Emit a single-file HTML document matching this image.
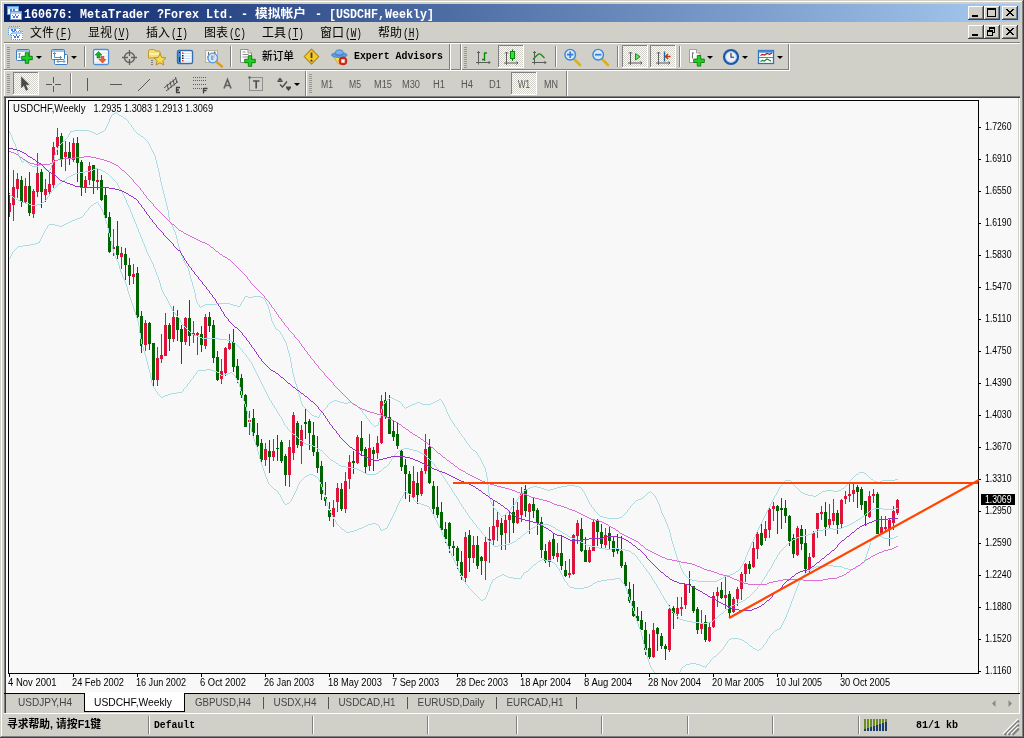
<!DOCTYPE html>
<html lang="zh-CN"><head><meta charset="utf-8"><title>160676: MetaTrader - [USDCHF,Weekly]</title>
<style>
html,body{margin:0;padding:0;background:#D0D0C8;overflow:hidden}
svg{display:block;will-change:transform}
.s{font-family:"Liberation Sans","DejaVu Sans",sans-serif}
.m{font-family:"Liberation Mono","DejaVu Sans Mono",monospace}
.c{font-family:"Liberation Sans","Noto Sans CJK SC","WenQuanYi Zen Hei",sans-serif}
</style></head><body>
<svg width="1024" height="738" viewBox="0 0 1024 738" shape-rendering="crispEdges">
<rect x="0" y="0" width="1024" height="738" fill="#D0D0C8"/>
<rect x="0" y="0" width="1024" height="1" fill="#D0D0C8"/>
<rect x="0" y="0" width="1" height="738" fill="#D0D0C8"/>
<rect x="1" y="1" width="1022" height="1" fill="#FFFFFF"/>
<rect x="1" y="1" width="1" height="736" fill="#FFFFFF"/>
<rect x="0" y="737" width="1024" height="1" fill="#404040"/>
<rect x="1023" y="0" width="1" height="738" fill="#404040"/>
<rect x="1" y="736" width="1022" height="1" fill="#808080"/>
<rect x="1022" y="1" width="1" height="736" fill="#808080"/>
<defs><linearGradient id="tg" x1="0" x2="1" y1="0" y2="0"><stop offset="0" stop-color="#0A246A"/><stop offset="1" stop-color="#A6CAF0"/></linearGradient></defs>
<rect x="4" y="4" width="1016" height="18" fill="url(#tg)"/>
<g transform="translate(7,5)">
<rect x="0.5" y="1.5" width="11" height="8" fill="#fff" stroke="#5A9CDC"/>
<rect x="1" y="2" width="10" height="2" fill="#A8CCF0"/>
<path d="M2.5 6.5 l1.5-2 1.5 2 1.5-2 1.5 2" fill="none" stroke="#4A78E0" stroke-width="1"/>
<rect x="3.5" y="6.5" width="11" height="8" fill="#fff" stroke="#5A9CDC"/>
<rect x="4" y="7" width="10" height="2" fill="#A8CCF0"/>
<path d="M5.5 10 l1.5 3 1.5-3 1.5 3 1.5-3" fill="none" stroke="#4A78E0" stroke-width="1"/>
</g>
<text class="m" x="24" y="18" font-size="12" fill="#fff" font-weight="bold" textLength="224" lengthAdjust="spacingAndGlyphs">160676: MetaTrader ?Forex Ltd. -</text>
<text class="c" x="255" y="18" font-size="12" fill="#fff" font-weight="bold" textLength="51" lengthAdjust="spacingAndGlyphs">模拟帐户</text>
<text class="m" x="315" y="18" font-size="12" fill="#fff" font-weight="bold" textLength="119" lengthAdjust="spacingAndGlyphs">- [USDCHF,Weekly]</text>
<rect x="968" y="6" width="16" height="14" fill="#D0D0C8"/>
<rect x="968" y="6" width="15" height="1" fill="#FFFFFF"/>
<rect x="968" y="6" width="1" height="13" fill="#FFFFFF"/>
<rect x="968" y="19" width="16" height="1" fill="#404040"/>
<rect x="983" y="6" width="1" height="14" fill="#404040"/>
<rect x="969" y="18" width="14" height="1" fill="#808080"/>
<rect x="982" y="7" width="1" height="12" fill="#808080"/>
<rect x="972" y="15" width="6" height="2" fill="#000"/>
<rect x="984" y="6" width="16" height="14" fill="#D0D0C8"/>
<rect x="984" y="6" width="15" height="1" fill="#FFFFFF"/>
<rect x="984" y="6" width="1" height="13" fill="#FFFFFF"/>
<rect x="984" y="19" width="16" height="1" fill="#404040"/>
<rect x="999" y="6" width="1" height="14" fill="#404040"/>
<rect x="985" y="18" width="14" height="1" fill="#808080"/>
<rect x="998" y="7" width="1" height="12" fill="#808080"/>
<rect x="987" y="8" width="9" height="9" fill="#000"/>
<rect x="988" y="10" width="7" height="6" fill="#D0D0C8"/>
<rect x="1002" y="6" width="16" height="14" fill="#D0D0C8"/>
<rect x="1002" y="6" width="15" height="1" fill="#FFFFFF"/>
<rect x="1002" y="6" width="1" height="13" fill="#FFFFFF"/>
<rect x="1002" y="19" width="16" height="1" fill="#404040"/>
<rect x="1017" y="6" width="1" height="14" fill="#404040"/>
<rect x="1003" y="18" width="14" height="1" fill="#808080"/>
<rect x="1016" y="7" width="1" height="12" fill="#808080"/>
<path d="M1006 9 l2 0 l6 7 l-2 0 z M1012 9 l2 0 l-6 7 l-2 0 z" fill="#000"/>
<g transform="translate(8,25)">
<rect x="0.5" y="1.5" width="11" height="8" fill="#fff" stroke="#5A9CDC" stroke-dasharray="1 1"/>
<rect x="1" y="2" width="10" height="2" fill="#A8CCF0"/>
<path d="M2.5 6.5 l1.5-2 1.5 2 1.5-2 1.5 2" fill="none" stroke="#4A78E0" stroke-width="1"/>
<rect x="3.5" y="6.5" width="11" height="8" fill="#fff" stroke="#5A9CDC" stroke-dasharray="1 1"/>
<rect x="4" y="7" width="10" height="2" fill="#A8CCF0"/>
<path d="M5.5 10 l1.5 3 1.5-3 1.5 3 1.5-3" fill="none" stroke="#4A78E0" stroke-width="1"/>
</g>
<text class="c" x="30" y="37" font-size="12" textLength="24" lengthAdjust="spacingAndGlyphs">文件</text>
<text class="m" x="55" y="37" font-size="12" textLength="17" lengthAdjust="spacingAndGlyphs">(F)</text>
<rect x="60" y="39" width="6" height="1" fill="#000"/>
<text class="c" x="88" y="37" font-size="12" textLength="24" lengthAdjust="spacingAndGlyphs">显视</text>
<text class="m" x="113" y="37" font-size="12" textLength="17" lengthAdjust="spacingAndGlyphs">(V)</text>
<rect x="118" y="39" width="6" height="1" fill="#000"/>
<text class="c" x="146" y="37" font-size="12" textLength="24" lengthAdjust="spacingAndGlyphs">插入</text>
<text class="m" x="171" y="37" font-size="12" textLength="17" lengthAdjust="spacingAndGlyphs">(I)</text>
<rect x="176" y="39" width="6" height="1" fill="#000"/>
<text class="c" x="204" y="37" font-size="12" textLength="24" lengthAdjust="spacingAndGlyphs">图表</text>
<text class="m" x="229" y="37" font-size="12" textLength="17" lengthAdjust="spacingAndGlyphs">(C)</text>
<rect x="234" y="39" width="6" height="1" fill="#000"/>
<text class="c" x="262" y="37" font-size="12" textLength="24" lengthAdjust="spacingAndGlyphs">工具</text>
<text class="m" x="287" y="37" font-size="12" textLength="17" lengthAdjust="spacingAndGlyphs">(T)</text>
<rect x="292" y="39" width="6" height="1" fill="#000"/>
<text class="c" x="320" y="37" font-size="12" textLength="24" lengthAdjust="spacingAndGlyphs">窗口</text>
<text class="m" x="345" y="37" font-size="12" textLength="17" lengthAdjust="spacingAndGlyphs">(W)</text>
<rect x="350" y="39" width="6" height="1" fill="#000"/>
<text class="c" x="378" y="37" font-size="12" textLength="24" lengthAdjust="spacingAndGlyphs">帮助</text>
<text class="m" x="403" y="37" font-size="12" textLength="17" lengthAdjust="spacingAndGlyphs">(H)</text>
<rect x="408" y="39" width="6" height="1" fill="#000"/>
<rect x="968" y="25" width="16" height="14" fill="#D0D0C8"/>
<rect x="968" y="25" width="15" height="1" fill="#FFFFFF"/>
<rect x="968" y="25" width="1" height="13" fill="#FFFFFF"/>
<rect x="968" y="38" width="16" height="1" fill="#404040"/>
<rect x="983" y="25" width="1" height="14" fill="#404040"/>
<rect x="969" y="37" width="14" height="1" fill="#808080"/>
<rect x="982" y="26" width="1" height="12" fill="#808080"/>
<rect x="972" y="34" width="6" height="2" fill="#000"/>
<rect x="984" y="25" width="16" height="14" fill="#D0D0C8"/>
<rect x="984" y="25" width="15" height="1" fill="#FFFFFF"/>
<rect x="984" y="25" width="1" height="13" fill="#FFFFFF"/>
<rect x="984" y="38" width="16" height="1" fill="#404040"/>
<rect x="999" y="25" width="1" height="14" fill="#404040"/>
<rect x="985" y="37" width="14" height="1" fill="#808080"/>
<rect x="998" y="26" width="1" height="12" fill="#808080"/>
<rect x="989" y="27" width="6" height="6" fill="#000"/>
<rect x="990" y="29" width="4" height="3" fill="#D0D0C8"/>
<rect x="987" y="30" width="6" height="6" fill="#000"/>
<rect x="988" y="32" width="4" height="3" fill="#D0D0C8"/>
<rect x="1002" y="25" width="16" height="14" fill="#D0D0C8"/>
<rect x="1002" y="25" width="15" height="1" fill="#FFFFFF"/>
<rect x="1002" y="25" width="1" height="13" fill="#FFFFFF"/>
<rect x="1002" y="38" width="16" height="1" fill="#404040"/>
<rect x="1017" y="25" width="1" height="14" fill="#404040"/>
<rect x="1003" y="37" width="14" height="1" fill="#808080"/>
<rect x="1016" y="26" width="1" height="12" fill="#808080"/>
<path d="M1006 28 l2 0 l6 7 l-2 0 z M1012 28 l2 0 l-6 7 l-2 0 z" fill="#000"/>
<rect x="4" y="42" width="1016" height="1" fill="#808080"/>
<rect x="4" y="43" width="1016" height="1" fill="#FFFFFF"/>
<defs><pattern id="chk" width="2" height="2" patternUnits="userSpaceOnUse"><rect width="2" height="2" fill="#fff"/><rect width="1" height="1" fill="#D0D0C8"/><rect x="1" y="1" width="1" height="1" fill="#D0D0C8"/></pattern></defs>
<rect x="4" y="44" width="1" height="26" fill="#FFFFFF"/>
<rect x="4" y="69" width="786" height="1" fill="#808080"/>
<rect x="4" y="70" width="786" height="1" fill="#FFFFFF"/>
<rect x="449" y="44" width="1" height="26" fill="#808080"/>
<rect x="450" y="44" width="1" height="26" fill="#FFFFFF"/>
<rect x="460" y="44" width="1" height="26" fill="#808080"/>
<rect x="461" y="44" width="1" height="26" fill="#FFFFFF"/>
<rect x="788" y="44" width="1" height="26" fill="#808080"/>
<rect x="789" y="44" width="1" height="27" fill="#FFFFFF"/>
<rect x="7" y="47" width="3" height="1" fill="#9A968E"/>
<rect x="7" y="49" width="3" height="1" fill="#9A968E"/>
<rect x="7" y="51" width="3" height="1" fill="#9A968E"/>
<rect x="7" y="53" width="3" height="1" fill="#9A968E"/>
<rect x="7" y="55" width="3" height="1" fill="#9A968E"/>
<rect x="7" y="57" width="3" height="1" fill="#9A968E"/>
<rect x="7" y="59" width="3" height="1" fill="#9A968E"/>
<rect x="7" y="61" width="3" height="1" fill="#9A968E"/>
<rect x="7" y="63" width="3" height="1" fill="#9A968E"/>
<rect x="7" y="65" width="3" height="1" fill="#9A968E"/>
<rect x="7" y="67" width="3" height="1" fill="#9A968E"/>
<rect x="464" y="47" width="3" height="1" fill="#9A968E"/>
<rect x="464" y="49" width="3" height="1" fill="#9A968E"/>
<rect x="464" y="51" width="3" height="1" fill="#9A968E"/>
<rect x="464" y="53" width="3" height="1" fill="#9A968E"/>
<rect x="464" y="55" width="3" height="1" fill="#9A968E"/>
<rect x="464" y="57" width="3" height="1" fill="#9A968E"/>
<rect x="464" y="59" width="3" height="1" fill="#9A968E"/>
<rect x="464" y="61" width="3" height="1" fill="#9A968E"/>
<rect x="464" y="63" width="3" height="1" fill="#9A968E"/>
<rect x="464" y="65" width="3" height="1" fill="#9A968E"/>
<rect x="464" y="67" width="3" height="1" fill="#9A968E"/>
<rect x="84" y="46" width="1" height="21" fill="#808080"/>
<rect x="85" y="46" width="1" height="21" fill="#FFFFFF"/>
<rect x="230" y="46" width="1" height="21" fill="#808080"/>
<rect x="231" y="46" width="1" height="21" fill="#FFFFFF"/>
<rect x="555" y="46" width="1" height="21" fill="#808080"/>
<rect x="556" y="46" width="1" height="21" fill="#FFFFFF"/>
<rect x="617" y="46" width="1" height="21" fill="#808080"/>
<rect x="618" y="46" width="1" height="21" fill="#FFFFFF"/>
<rect x="679" y="46" width="1" height="21" fill="#808080"/>
<rect x="680" y="46" width="1" height="21" fill="#FFFFFF"/>
<rect x="4" y="71" width="1" height="25" fill="#FFFFFF"/>
<rect x="305" y="71" width="1" height="25" fill="#808080"/>
<rect x="306" y="71" width="1" height="25" fill="#FFFFFF"/>
<rect x="566" y="71" width="1" height="25" fill="#808080"/>
<rect x="567" y="71" width="1" height="25" fill="#FFFFFF"/>
<rect x="7" y="74" width="3" height="1" fill="#9A968E"/>
<rect x="7" y="76" width="3" height="1" fill="#9A968E"/>
<rect x="7" y="78" width="3" height="1" fill="#9A968E"/>
<rect x="7" y="80" width="3" height="1" fill="#9A968E"/>
<rect x="7" y="82" width="3" height="1" fill="#9A968E"/>
<rect x="7" y="84" width="3" height="1" fill="#9A968E"/>
<rect x="7" y="86" width="3" height="1" fill="#9A968E"/>
<rect x="7" y="88" width="3" height="1" fill="#9A968E"/>
<rect x="7" y="90" width="3" height="1" fill="#9A968E"/>
<rect x="7" y="92" width="3" height="1" fill="#9A968E"/>
<rect x="309" y="74" width="3" height="1" fill="#9A968E"/>
<rect x="309" y="76" width="3" height="1" fill="#9A968E"/>
<rect x="309" y="78" width="3" height="1" fill="#9A968E"/>
<rect x="309" y="80" width="3" height="1" fill="#9A968E"/>
<rect x="309" y="82" width="3" height="1" fill="#9A968E"/>
<rect x="309" y="84" width="3" height="1" fill="#9A968E"/>
<rect x="309" y="86" width="3" height="1" fill="#9A968E"/>
<rect x="309" y="88" width="3" height="1" fill="#9A968E"/>
<rect x="309" y="90" width="3" height="1" fill="#9A968E"/>
<rect x="309" y="92" width="3" height="1" fill="#9A968E"/>
<rect x="70" y="73" width="1" height="21" fill="#808080"/>
<rect x="71" y="73" width="1" height="21" fill="#FFFFFF"/>
<rect x="4" y="96" width="1016" height="1" fill="#808080"/>
<rect x="4" y="97" width="1016" height="1" fill="#404040"/>
<rect x="13" y="72" width="26" height="23" fill="url(#chk)"/>
<rect x="13" y="72" width="26" height="1" fill="#808080"/>
<rect x="13" y="72" width="1" height="23" fill="#808080"/>
<rect x="13" y="94" width="26" height="1" fill="#FFFFFF"/>
<rect x="38" y="72" width="1" height="23" fill="#FFFFFF"/>
<rect x="511" y="72" width="26" height="23" fill="url(#chk)"/>
<rect x="511" y="72" width="26" height="1" fill="#808080"/>
<rect x="511" y="72" width="1" height="23" fill="#808080"/>
<rect x="511" y="94" width="26" height="1" fill="#FFFFFF"/>
<rect x="536" y="72" width="1" height="23" fill="#FFFFFF"/>
<rect x="498" y="45" width="26" height="23" fill="url(#chk)"/>
<rect x="498" y="45" width="26" height="1" fill="#808080"/>
<rect x="498" y="45" width="1" height="23" fill="#808080"/>
<rect x="498" y="67" width="26" height="1" fill="#FFFFFF"/>
<rect x="523" y="45" width="1" height="23" fill="#FFFFFF"/>
<rect x="622" y="45" width="26" height="23" fill="url(#chk)"/>
<rect x="622" y="45" width="26" height="1" fill="#808080"/>
<rect x="622" y="45" width="1" height="23" fill="#808080"/>
<rect x="622" y="67" width="26" height="1" fill="#FFFFFF"/>
<rect x="647" y="45" width="1" height="23" fill="#FFFFFF"/>
<rect x="650" y="45" width="26" height="23" fill="url(#chk)"/>
<rect x="650" y="45" width="26" height="1" fill="#808080"/>
<rect x="650" y="45" width="1" height="23" fill="#808080"/>
<rect x="650" y="67" width="26" height="1" fill="#FFFFFF"/>
<rect x="675" y="45" width="1" height="23" fill="#FFFFFF"/>
<g shape-rendering="geometricPrecision">
<!-- TB1: new chart -->
<rect x="16.5" y="49.5" width="13" height="11" rx="1" fill="#fff" stroke="#3A7CC0"/>
<rect x="17" y="50" width="12" height="2" fill="#9CC4EC"/>
<path d="M19.5 53v5M18 54.5l1.5-1.5 1.5 1.5M18 56.5l1.5 1.5 1.5-1.5" stroke="#7A98B8" fill="none"/>
<path d="M25.3 52.7h3.4v3.5999999999999996h3.5999999999999996v3.4h-3.5999999999999996v3.5999999999999996h-3.4v-3.5999999999999996h-3.5999999999999996v-3.4h3.5999999999999996z" fill="#20D020" stroke="#0A7A0A" stroke-width=".9"/>
<path d="M36 56h6l-3 3z" fill="#000"/>
<!-- TB1: profiles -->
<rect x="54.500" y="54.500" width="13" height="10" rx="1" fill="#fff" stroke="#3A7CC0"/>
<path d="M57 61.500h8M57 61.500l1.500-1.500M57 61.500l1.500 1.500M65 61.500l-1.500-1.500M65 61.500l-1.500 1.500" stroke="#6A98C8" fill="none"/>
<rect x="51.500" y="49.500" width="13" height="10" rx="1" fill="#fff" stroke="#3A7CC0"/>
<rect x="52" y="50" width="12" height="2" fill="#9CC4EC"/>
<path d="M54.500 52.500v5h7M53 54l1.500-1.500 1.500 1.500M60 56l1.500 1.500-1.500 1.500" stroke="#6A8CB0" fill="none"/>
<path d="M71 56h6l-3 3z" fill="#000"/>
<!-- TB1: market watch -->
<rect x="93.500" y="49.500" width="15" height="15" rx="1.500" fill="#fff" stroke="#4A90E0" stroke-width="1.300"/>
<path d="M100 53h7M100 56h7M95 59h5M95 62h5" stroke="#E0E0E0"/>
<path d="M98.500 51.500l3.500 3.500h-2v3h-3v-3h-2z" fill="#18B030" stroke="#0A7A1A" stroke-width=".6"/>
<path d="M102.500 63l3.500-3.500h-2v-3h-3v3h-2z" fill="#F06040" stroke="#C03010" stroke-width=".6"/>
<!-- TB1: crosshair circle -->
<circle cx="129.500" cy="57.500" r="5" fill="none" stroke="#606060" stroke-width="1.300"/>
<path d="M129.500 50v6M129.500 59v6M122 57.500h6M131 57.500h6" stroke="#606060" stroke-width="1.300"/>
<!-- TB1: folder star -->
<path d="M148.500 51.500q0-2 2-2h3q1.500 0 2 1.500h3.500q1 0 1 1v6h-11.500z" fill="#F4DC78" stroke="#C09820"/>
<path d="M149 53h10.500v2h-10.500z" fill="#FBF0B0"/>
<path d="M152 60v1M152 62v1M152 64v1" stroke="#303030" stroke-width="1"/>
<path d="M160 53.500l1.800 4 4.200.4-3.200 2.900 1 4.200-3.800-2.300-3.800 2.300 1-4.200-3.200-2.900 4.200-.4z" fill="#F6DC50" stroke="#B8860B" stroke-width=".9"/>
<!-- TB1: data window -->
<rect x="177.500" y="50.500" width="15" height="13" rx="1.500" fill="#fff" stroke="#3070B0" stroke-width="1.400"/>
<rect x="178" y="51" width="3" height="12" fill="#4A8AD0"/>
<rect x="179" y="57" width="1" height="5" fill="#203050"/>
<path d="M183 53.500h9M183 56h9M183 58.500h9M183 61h9" stroke="#C8DCF4"/>
<rect x="179" y="52" width="1" height="1" fill="#000"/>
<rect x="182" y="52.500" width="1.500" height="1.500" fill="#E03020"/><rect x="182" y="55" width="1.500" height="1.500" fill="#202020"/><rect x="182" y="57.500" width="1.500" height="1.500" fill="#202020"/><rect x="182" y="60" width="1.500" height="1.500" fill="#E03020"/>
<!-- TB1: tester / chart magnifier -->
<rect x="205.500" y="50.500" width="12" height="12" fill="#F4F4F0" stroke="#B8B4A0"/>
<path d="M208.500 52v8M207 57h1.500M214.500 51.500v6M214.500 53h1.500" stroke="#606870"/>
<circle cx="212.700" cy="58" r="4.800" fill="#CFE4FA" fill-opacity=".85" stroke="#5A98E0" stroke-width="1.300"/>
<rect x="211" y="55.500" width="2.500" height="4.500" fill="#98A8B8"/>
<path d="M216.500 62l5.500 4.500" stroke="#D8A020" stroke-width="2.400" stroke-linecap="round"/>
<!-- TB1: new order -->
<path d="M240.500 49.500h7.500l3.500 3.500v9.500h-11z" fill="#fff" stroke="#909090"/>
<path d="M248 49.500v3.500h3.500" fill="#E8E8E8" stroke="#909090"/>
<path d="M242.500 52h3M242.500 54.500h6M242.500 57h6" stroke="#909090"/>
<path d="M248.3 55.7h3.4v3.5999999999999996h3.5999999999999996v3.4h-3.5999999999999996v3.5999999999999996h-3.4v-3.5999999999999996h-3.5999999999999996v-3.4h3.5999999999999996z" fill="#20D020" stroke="#0A7A0A" stroke-width=".9"/>
<!-- TB1: warning diamond -->
<path d="M311.500 49.200l7.300 7.500-7.300 7.500-7.300-7.500z" fill="#F4CC28" stroke="#B88A10" stroke-width="1.200" stroke-linejoin="round"/>
<path d="M311.500 52.500v5.500" stroke="#404040" stroke-width="1.800"/><circle cx="311.500" cy="60.700" r="1.100" fill="#404040"/>
<!-- TB1: expert advisors hat -->
<path d="M333.500 56.500l4.500 7q1.500 1.200 3 0l5-7.500z" fill="#F6D860" stroke="#C8A020" stroke-width=".8"/>
<ellipse cx="339.300" cy="55" rx="7.800" ry="2.600" fill="#5C9CE0" stroke="#3A78C0" stroke-width=".7"/>
<ellipse cx="339.300" cy="52.600" rx="4" ry="2.900" fill="#78B0EC" stroke="#3A78C0" stroke-width=".7"/>
<path d="M335.400 54.300q4 1.600 7.800 0" stroke="#3A78C0" stroke-width=".7" fill="none"/>
<circle cx="343" cy="61" r="4" fill="#E02818" stroke="#B01808" stroke-width=".6"/>
<rect x="341.300" y="59.300" width="3.400" height="3.400" fill="#fff"/>
<!-- TB1 g2: bar chart -->
<g stroke="#5C5C5C" fill="none" stroke-width="1">
<path d="M478.500 51.500v13M476 62.500h14M477 53l1.500-1.500 1.500 1.500M488.500 61l1.500 1.500-1.500 1.500"/>
<path d="M506.500 52v13M504 63h14M505 53.500l1.500-1.500 1.500 1.500M516.500 61.500l1.500 1.500-1.500 1.500"/>
<path d="M534.500 51.500v13M532 62.500h14M533 53l1.500-1.500 1.500 1.500M544.500 61l1.500 1.500-1.500 1.500"/>
<path d="M630.500 52v13M628 63h14M629 53.500l1.500-1.500 1.500 1.500M640.500 61.500l1.500 1.500-1.500 1.500"/>
<path d="M658.500 52v13M656 63h14M657 53.500l1.500-1.500 1.500 1.500M668.500 61.500l1.500 1.500-1.500 1.500"/>
</g>
<path d="M484.500 52.500v8.500M484.500 53h2.500M482 59.500h2.500" stroke="#0A8A0A" stroke-width="1.400" fill="none"/>
<path d="M512.500 49.500v11.500" stroke="#0A7A0A" stroke-width="1.200"/>
<rect x="510.500" y="51.500" width="4" height="7" fill="#38E038" stroke="#0A8A0A"/>
<path d="M533 59.500q3-3.500 5.500-5.500q1.500-.5 3 1l3 3" stroke="#1A8A1A" stroke-width="1.300" fill="none"/>
<!-- zoom in/out -->
<path d="M574.500 59.500l5.500 5.500" stroke="#D8B020" stroke-width="2.600" stroke-linecap="round"/>
<circle cx="570.200" cy="54.700" r="5.300" fill="#D4E8FC" stroke="#3A86D8" stroke-width="1.400"/>
<path d="M567 54.700h6.400M570.200 51.500v6.400" stroke="#3A7CC8" stroke-width="1.700"/>
<path d="M602.500 59.500l5.500 5.500" stroke="#D8B020" stroke-width="2.600" stroke-linecap="round"/>
<circle cx="598.200" cy="54.700" r="5.300" fill="#D4E8FC" stroke="#3A86D8" stroke-width="1.400"/>
<path d="M595 54.700h6.400" stroke="#3A7CC8" stroke-width="1.700"/>
<!-- autoscroll / shift -->
<path d="M635.500 53.500v6.500l4.500-3.250z" fill="#58E858" stroke="#0A8A0A" stroke-width=".9"/>
<path d="M664.500 51.500v10" stroke="#1A6AA8" stroke-width="1.400"/>
<path d="M670.500 56.500h-5M668 54l-2.500 2.500 2.500 2.500" stroke="#D03010" stroke-width="1.300" fill="none"/>
<!-- indicators -->
<path d="M689.500 49.500h7l3.500 3.500v9.500h-10.500z" fill="#fff" stroke="#A0A0A0"/>
<path d="M696.500 49.500v3.500h3.500" fill="#E8E8E8" stroke="#A0A0A0"/>
<path d="M692.500 52.500v6M692.500 53h1.500" stroke="#707070"/>
<path d="M697.3 55.5h3.4v3.5999999999999996h3.5999999999999996v3.4h-3.5999999999999996v3.5999999999999996h-3.4v-3.5999999999999996h-3.5999999999999996v-3.4h3.5999999999999996z" fill="#20D020" stroke="#0A7A0A" stroke-width=".9"/>
<path d="M707 56h6l-3 3z" fill="#000"/>
<!-- clock -->
<circle cx="731" cy="57" r="6.900" fill="#E8F0F8" stroke="#1E58A8" stroke-width="2.400"/>
<circle cx="731" cy="57" r="5.300" fill="none" stroke="#A8C8E8" stroke-width=".8"/>
<path d="M731 53v4.200h3" stroke="#303030" stroke-width="1.100" fill="none"/>
<path d="M742 56h6l-3 3z" fill="#000"/>
<!-- templates -->
<rect x="758.500" y="50.500" width="15" height="13" fill="#fff" stroke="#3070C0" stroke-width="1.300"/>
<rect x="758.500" y="50.500" width="15" height="2.200" fill="#4A88D8"/>
<path d="M759 57.500h14" stroke="#4A88D8"/>
<path d="M760.500 55.500l2-1 2 .5 2.500-1.500 2.500.8 2.500-1.300" stroke="#A02010" stroke-width="1.200" fill="none"/>
<path d="M760.500 61.500l2-1 2 .5 2.500-2 2 1 2 1.200" stroke="#1A8A2A" stroke-width="1.200" fill="none"/>
<path d="M777 56h6l-3 3z" fill="#000"/>
<!-- TB2 -->
<path d="M21.300 76.800v11.200l2.600-2.600 2.200 5 1.800-.8-2.200-4.900h3.600z" fill="#484848" stroke="#484848" stroke-width=".4"/>
<path d="M46 84.500h6M55 84.500h6M53.500 77v6M53.500 86v6" stroke="#585858" stroke-width="1"/>
<path d="M87.500 78v13" stroke="#585858" stroke-width="1"/>
<path d="M110 84.500h12" stroke="#585858" stroke-width="1"/>
<path d="M138 91l12-12" stroke="#585858" stroke-width="1"/>
<g stroke="#505050" stroke-width="1" fill="none">
<path d="M164 88l12-9.500M166 91l12-9.500M167 84l1.500 6M170 81.500l1.500 6M173 79.500l1.500 6M175.500 77l1.500 6"/>
</g>
<path d="M176 87.500h4M176 90h3M176 92.500h4M176.500 87.500v5" stroke="#404040" stroke-width="1.300" fill="none"/>
<g stroke="#606060" stroke-dasharray="1 1">
<path d="M193 77.500h14M193 80.500h14M193 84.500h14M193 88.500h9"/>
</g>
<path d="M203.500 88v5.500M203.500 88.500h4M203.500 90.700h3" stroke="#404040" stroke-width="1.300" fill="none"/>
<path d="M224 88.500l3.500-9 3.500 9M225.500 85.500h4" stroke="#606060" stroke-width="1.600" fill="none"/>
<rect x="249.500" y="77.500" width="13" height="13" fill="none" stroke="#505050" stroke-dasharray="1 1"/>
<rect x="248.500" y="76.500" width="2" height="2" fill="#505050"/>
<path d="M253 81h6.500M256.200 81v7.500" stroke="#505050" stroke-width="1.700" fill="none"/>
<path d="M280 77.500l2.500 3h-5zM288.500 91l2.500-3h-5z" fill="#484848"/>
<path d="M277.500 80.500h5v1.500h-5zM286 86.500h5v1.500h-5z" fill="#484848"/>
<path d="M280 84.500l2.500 2.500 4.500-5.500" stroke="#484848" stroke-width="1.300" fill="none"/>
<path d="M294 83h6l-3 3z" fill="#000"/>
</g>

<text class="s" x="321.0" y="88" font-size="10" fill="#555" textLength="12" lengthAdjust="spacingAndGlyphs">M1</text>
<text class="s" x="349.0" y="88" font-size="10" fill="#555" textLength="12" lengthAdjust="spacingAndGlyphs">M5</text>
<text class="s" x="374.0" y="88" font-size="10" fill="#555" textLength="18" lengthAdjust="spacingAndGlyphs">M15</text>
<text class="s" x="402.0" y="88" font-size="10" fill="#555" textLength="18" lengthAdjust="spacingAndGlyphs">M30</text>
<text class="s" x="433.0" y="88" font-size="10" fill="#555" textLength="12" lengthAdjust="spacingAndGlyphs">H1</text>
<text class="s" x="461.0" y="88" font-size="10" fill="#555" textLength="12" lengthAdjust="spacingAndGlyphs">H4</text>
<text class="s" x="489.0" y="88" font-size="10" fill="#555" textLength="12" lengthAdjust="spacingAndGlyphs">D1</text>
<text class="s" x="518.0" y="88" font-size="10" fill="#555" textLength="12" lengthAdjust="spacingAndGlyphs">W1</text>
<text class="s" x="544.0" y="88" font-size="10" fill="#555" textLength="14" lengthAdjust="spacingAndGlyphs">MN</text>
<text class="c" x="262" y="60" font-size="11" font-weight="500" textLength="32" lengthAdjust="spacingAndGlyphs">新订单</text>
<text class="m" x="354" y="59" font-size="10" font-weight="bold" textLength="89" lengthAdjust="spacingAndGlyphs">Expert Advisors</text>
<rect x="4" y="98" width="1" height="595" fill="#808080"/>
<rect x="5" y="98" width="1" height="595" fill="#404040"/>
<rect x="1018" y="98" width="1" height="595" fill="#D0D0C8"/>
<rect x="1019" y="98" width="1" height="595" fill="#FFFFFF"/>
<rect x="6" y="98" width="1012" height="595" fill="#FFFFFF"/>
<rect x="9" y="101" width="969" height="572" fill="#F8F8F8"/>
<rect x="979" y="98" width="39" height="594" fill="#F8F8F8"/>
<rect x="6" y="674" width="1012" height="18" fill="#F8F8F8"/>
<rect x="8" y="100" width="971" height="1" fill="#000"/>
<rect x="8" y="100" width="1" height="574" fill="#000"/>
<rect x="8" y="673" width="971" height="1" fill="#000"/>
<rect x="978" y="100" width="1" height="574" fill="#000"/>
<defs><clipPath id="cc"><rect x="9" y="101" width="970" height="572"/></clipPath></defs>
<g clip-path="url(#cc)">
<rect x="9" y="193" width="1" height="24" fill="#DC143C"/>
<rect x="8" y="203" width="3" height="9" fill="#DC143C"/>
<rect x="13" y="170" width="1" height="51" fill="#DC143C"/>
<rect x="12" y="187" width="3" height="18" fill="#DC143C"/>
<rect x="17" y="173" width="1" height="25" fill="#DC143C"/>
<rect x="16" y="179" width="3" height="10" fill="#DC143C"/>
<rect x="21" y="176" width="1" height="31" fill="#006400"/>
<rect x="20" y="180" width="3" height="22" fill="#006400"/>
<rect x="25" y="178" width="1" height="26" fill="#DC143C"/>
<rect x="24" y="186" width="3" height="16" fill="#DC143C"/>
<rect x="29" y="172" width="1" height="44" fill="#006400"/>
<rect x="28" y="186" width="3" height="27" fill="#006400"/>
<rect x="33" y="189" width="1" height="29" fill="#DC143C"/>
<rect x="32" y="191" width="3" height="23" fill="#DC143C"/>
<rect x="37" y="153" width="1" height="44" fill="#DC143C"/>
<rect x="36" y="173" width="3" height="19" fill="#DC143C"/>
<rect x="41" y="169" width="1" height="39" fill="#006400"/>
<rect x="40" y="172" width="3" height="20" fill="#006400"/>
<rect x="45" y="179" width="1" height="23" fill="#DC143C"/>
<rect x="44" y="189" width="3" height="6" fill="#DC143C"/>
<rect x="49" y="172" width="1" height="22" fill="#DC143C"/>
<rect x="48" y="184" width="3" height="8" fill="#DC143C"/>
<rect x="53" y="142" width="1" height="46" fill="#DC143C"/>
<rect x="52" y="147" width="3" height="38" fill="#DC143C"/>
<rect x="57" y="128" width="1" height="27" fill="#DC143C"/>
<rect x="56" y="137" width="3" height="10" fill="#DC143C"/>
<rect x="61" y="133" width="1" height="34" fill="#006400"/>
<rect x="60" y="136" width="3" height="23" fill="#006400"/>
<rect x="65" y="141" width="1" height="30" fill="#DC143C"/>
<rect x="64" y="152" width="3" height="5" fill="#DC143C"/>
<rect x="69" y="142" width="1" height="23" fill="#006400"/>
<rect x="68" y="152" width="3" height="6" fill="#006400"/>
<rect x="73" y="138" width="1" height="24" fill="#DC143C"/>
<rect x="72" y="143" width="3" height="17" fill="#DC143C"/>
<rect x="77" y="137" width="1" height="45" fill="#006400"/>
<rect x="76" y="143" width="3" height="20" fill="#006400"/>
<rect x="81" y="160" width="1" height="36" fill="#006400"/>
<rect x="80" y="162" width="3" height="26" fill="#006400"/>
<rect x="85" y="176" width="1" height="17" fill="#DC143C"/>
<rect x="84" y="180" width="3" height="7" fill="#DC143C"/>
<rect x="89" y="162" width="1" height="23" fill="#DC143C"/>
<rect x="88" y="166" width="3" height="14" fill="#DC143C"/>
<rect x="93" y="165" width="1" height="29" fill="#006400"/>
<rect x="92" y="165" width="3" height="16" fill="#006400"/>
<rect x="97" y="169" width="1" height="21" fill="#DC143C"/>
<rect x="96" y="180" width="3" height="2" fill="#DC143C"/>
<rect x="101" y="175" width="1" height="26" fill="#006400"/>
<rect x="100" y="180" width="3" height="20" fill="#006400"/>
<rect x="105" y="188" width="1" height="32" fill="#006400"/>
<rect x="104" y="195" width="3" height="23" fill="#006400"/>
<rect x="109" y="212" width="1" height="41" fill="#006400"/>
<rect x="108" y="217" width="3" height="35" fill="#006400"/>
<rect x="113" y="229" width="1" height="27" fill="#DC143C"/>
<rect x="112" y="247" width="3" height="2" fill="#DC143C"/>
<rect x="117" y="221" width="1" height="38" fill="#006400"/>
<rect x="116" y="246" width="3" height="9" fill="#006400"/>
<rect x="121" y="247" width="1" height="22" fill="#DC143C"/>
<rect x="120" y="253" width="3" height="4" fill="#DC143C"/>
<rect x="125" y="248" width="1" height="32" fill="#006400"/>
<rect x="124" y="254" width="3" height="11" fill="#006400"/>
<rect x="129" y="258" width="1" height="27" fill="#006400"/>
<rect x="128" y="265" width="3" height="11" fill="#006400"/>
<rect x="133" y="264" width="1" height="20" fill="#DC143C"/>
<rect x="132" y="274" width="3" height="3" fill="#DC143C"/>
<rect x="137" y="267" width="1" height="53" fill="#006400"/>
<rect x="136" y="273" width="3" height="44" fill="#006400"/>
<rect x="141" y="311" width="1" height="42" fill="#006400"/>
<rect x="140" y="316" width="3" height="30" fill="#006400"/>
<rect x="145" y="320" width="1" height="31" fill="#DC143C"/>
<rect x="144" y="323" width="3" height="22" fill="#DC143C"/>
<rect x="149" y="322" width="1" height="28" fill="#006400"/>
<rect x="148" y="323" width="3" height="21" fill="#006400"/>
<rect x="153" y="343" width="1" height="43" fill="#006400"/>
<rect x="152" y="343" width="3" height="37" fill="#006400"/>
<rect x="157" y="347" width="1" height="39" fill="#DC143C"/>
<rect x="156" y="358" width="3" height="22" fill="#DC143C"/>
<rect x="161" y="334" width="1" height="29" fill="#DC143C"/>
<rect x="160" y="355" width="3" height="4" fill="#DC143C"/>
<rect x="165" y="313" width="1" height="43" fill="#DC143C"/>
<rect x="164" y="325" width="3" height="31" fill="#DC143C"/>
<rect x="169" y="323" width="1" height="28" fill="#006400"/>
<rect x="168" y="325" width="3" height="14" fill="#006400"/>
<rect x="173" y="306" width="1" height="36" fill="#DC143C"/>
<rect x="172" y="317" width="3" height="22" fill="#DC143C"/>
<rect x="177" y="310" width="1" height="31" fill="#006400"/>
<rect x="176" y="317" width="3" height="13" fill="#006400"/>
<rect x="181" y="325" width="1" height="39" fill="#006400"/>
<rect x="180" y="329" width="3" height="13" fill="#006400"/>
<rect x="185" y="317" width="1" height="28" fill="#DC143C"/>
<rect x="184" y="318" width="3" height="24" fill="#DC143C"/>
<rect x="189" y="300" width="1" height="46" fill="#006400"/>
<rect x="188" y="318" width="3" height="18" fill="#006400"/>
<rect x="193" y="321" width="1" height="22" fill="#DC143C"/>
<rect x="192" y="333" width="3" height="2" fill="#DC143C"/>
<rect x="197" y="332" width="1" height="23" fill="#DC143C"/>
<rect x="196" y="333" width="3" height="2" fill="#DC143C"/>
<rect x="201" y="326" width="1" height="26" fill="#006400"/>
<rect x="200" y="334" width="3" height="11" fill="#006400"/>
<rect x="205" y="314" width="1" height="35" fill="#DC143C"/>
<rect x="204" y="317" width="3" height="29" fill="#DC143C"/>
<rect x="209" y="312" width="1" height="20" fill="#006400"/>
<rect x="208" y="317" width="3" height="9" fill="#006400"/>
<rect x="213" y="320" width="1" height="43" fill="#006400"/>
<rect x="212" y="325" width="3" height="33" fill="#006400"/>
<rect x="217" y="351" width="1" height="30" fill="#006400"/>
<rect x="216" y="357" width="3" height="23" fill="#006400"/>
<rect x="221" y="359" width="1" height="25" fill="#DC143C"/>
<rect x="220" y="371" width="3" height="8" fill="#DC143C"/>
<rect x="225" y="347" width="1" height="29" fill="#DC143C"/>
<rect x="224" y="348" width="3" height="25" fill="#DC143C"/>
<rect x="229" y="334" width="1" height="16" fill="#DC143C"/>
<rect x="228" y="343" width="3" height="6" fill="#DC143C"/>
<rect x="233" y="329" width="1" height="43" fill="#006400"/>
<rect x="232" y="342" width="3" height="25" fill="#006400"/>
<rect x="237" y="359" width="1" height="24" fill="#006400"/>
<rect x="236" y="366" width="3" height="14" fill="#006400"/>
<rect x="241" y="374" width="1" height="24" fill="#006400"/>
<rect x="240" y="378" width="3" height="17" fill="#006400"/>
<rect x="245" y="394" width="1" height="33" fill="#006400"/>
<rect x="244" y="395" width="3" height="32" fill="#006400"/>
<rect x="249" y="411" width="1" height="24" fill="#DC143C"/>
<rect x="248" y="420" width="3" height="2" fill="#DC143C"/>
<rect x="253" y="409" width="1" height="28" fill="#006400"/>
<rect x="252" y="418" width="3" height="15" fill="#006400"/>
<rect x="257" y="423" width="1" height="24" fill="#006400"/>
<rect x="256" y="435" width="3" height="11" fill="#006400"/>
<rect x="261" y="439" width="1" height="23" fill="#006400"/>
<rect x="260" y="443" width="3" height="17" fill="#006400"/>
<rect x="265" y="443" width="1" height="23" fill="#DC143C"/>
<rect x="264" y="449" width="3" height="11" fill="#DC143C"/>
<rect x="269" y="440" width="1" height="33" fill="#006400"/>
<rect x="268" y="451" width="3" height="6" fill="#006400"/>
<rect x="273" y="439" width="1" height="22" fill="#DC143C"/>
<rect x="272" y="451" width="3" height="6" fill="#DC143C"/>
<rect x="277" y="435" width="1" height="26" fill="#006400"/>
<rect x="276" y="448" width="3" height="1" fill="#006400"/>
<rect x="281" y="440" width="1" height="23" fill="#006400"/>
<rect x="280" y="442" width="3" height="19" fill="#006400"/>
<rect x="285" y="454" width="1" height="32" fill="#006400"/>
<rect x="284" y="456" width="3" height="19" fill="#006400"/>
<rect x="289" y="440" width="1" height="47" fill="#DC143C"/>
<rect x="288" y="447" width="3" height="28" fill="#DC143C"/>
<rect x="293" y="412" width="1" height="48" fill="#DC143C"/>
<rect x="292" y="415" width="3" height="38" fill="#DC143C"/>
<rect x="297" y="421" width="1" height="27" fill="#006400"/>
<rect x="296" y="423" width="3" height="22" fill="#006400"/>
<rect x="301" y="425" width="1" height="39" fill="#DC143C"/>
<rect x="300" y="430" width="3" height="16" fill="#DC143C"/>
<rect x="305" y="409" width="1" height="30" fill="#006400"/>
<rect x="304" y="422" width="3" height="2" fill="#006400"/>
<rect x="309" y="419" width="1" height="31" fill="#006400"/>
<rect x="308" y="421" width="3" height="12" fill="#006400"/>
<rect x="313" y="422" width="1" height="34" fill="#006400"/>
<rect x="312" y="435" width="3" height="17" fill="#006400"/>
<rect x="317" y="436" width="1" height="37" fill="#006400"/>
<rect x="316" y="452" width="3" height="16" fill="#006400"/>
<rect x="321" y="461" width="1" height="39" fill="#006400"/>
<rect x="320" y="466" width="3" height="28" fill="#006400"/>
<rect x="325" y="482" width="1" height="24" fill="#006400"/>
<rect x="324" y="497" width="3" height="4" fill="#006400"/>
<rect x="329" y="502" width="1" height="19" fill="#006400"/>
<rect x="328" y="510" width="3" height="7" fill="#006400"/>
<rect x="333" y="500" width="1" height="27" fill="#DC143C"/>
<rect x="332" y="508" width="3" height="9" fill="#DC143C"/>
<rect x="337" y="483" width="1" height="29" fill="#DC143C"/>
<rect x="336" y="488" width="3" height="14" fill="#DC143C"/>
<rect x="341" y="483" width="1" height="28" fill="#006400"/>
<rect x="340" y="489" width="3" height="20" fill="#006400"/>
<rect x="345" y="472" width="1" height="41" fill="#DC143C"/>
<rect x="344" y="481" width="3" height="28" fill="#DC143C"/>
<rect x="349" y="455" width="1" height="34" fill="#DC143C"/>
<rect x="348" y="462" width="3" height="17" fill="#DC143C"/>
<rect x="353" y="451" width="1" height="23" fill="#006400"/>
<rect x="352" y="461" width="3" height="2" fill="#006400"/>
<rect x="357" y="435" width="1" height="29" fill="#DC143C"/>
<rect x="356" y="437" width="3" height="26" fill="#DC143C"/>
<rect x="361" y="421" width="1" height="35" fill="#006400"/>
<rect x="360" y="438" width="3" height="13" fill="#006400"/>
<rect x="365" y="447" width="1" height="27" fill="#006400"/>
<rect x="364" y="449" width="3" height="18" fill="#006400"/>
<rect x="369" y="434" width="1" height="37" fill="#DC143C"/>
<rect x="368" y="448" width="3" height="18" fill="#DC143C"/>
<rect x="373" y="447" width="1" height="24" fill="#006400"/>
<rect x="372" y="450" width="3" height="4" fill="#006400"/>
<rect x="377" y="436" width="1" height="23" fill="#DC143C"/>
<rect x="376" y="443" width="3" height="10" fill="#DC143C"/>
<rect x="381" y="395" width="1" height="49" fill="#DC143C"/>
<rect x="380" y="401" width="3" height="42" fill="#DC143C"/>
<rect x="385" y="392" width="1" height="27" fill="#006400"/>
<rect x="384" y="400" width="3" height="17" fill="#006400"/>
<rect x="389" y="395" width="1" height="39" fill="#006400"/>
<rect x="388" y="417" width="3" height="17" fill="#006400"/>
<rect x="393" y="420" width="1" height="21" fill="#006400"/>
<rect x="392" y="431" width="3" height="6" fill="#006400"/>
<rect x="397" y="422" width="1" height="27" fill="#006400"/>
<rect x="396" y="434" width="3" height="12" fill="#006400"/>
<rect x="401" y="449" width="1" height="22" fill="#006400"/>
<rect x="400" y="451" width="3" height="16" fill="#006400"/>
<rect x="405" y="459" width="1" height="40" fill="#006400"/>
<rect x="404" y="465" width="3" height="9" fill="#006400"/>
<rect x="409" y="471" width="1" height="31" fill="#006400"/>
<rect x="408" y="474" width="3" height="20" fill="#006400"/>
<rect x="413" y="466" width="1" height="32" fill="#DC143C"/>
<rect x="412" y="481" width="3" height="16" fill="#DC143C"/>
<rect x="417" y="472" width="1" height="32" fill="#006400"/>
<rect x="416" y="483" width="3" height="12" fill="#006400"/>
<rect x="421" y="468" width="1" height="28" fill="#DC143C"/>
<rect x="420" y="471" width="3" height="23" fill="#DC143C"/>
<rect x="425" y="434" width="1" height="40" fill="#DC143C"/>
<rect x="424" y="449" width="3" height="22" fill="#DC143C"/>
<rect x="429" y="439" width="1" height="45" fill="#006400"/>
<rect x="428" y="447" width="3" height="36" fill="#006400"/>
<rect x="433" y="481" width="1" height="34" fill="#006400"/>
<rect x="432" y="486" width="3" height="23" fill="#006400"/>
<rect x="437" y="486" width="1" height="32" fill="#006400"/>
<rect x="436" y="507" width="3" height="8" fill="#006400"/>
<rect x="441" y="502" width="1" height="28" fill="#006400"/>
<rect x="440" y="512" width="3" height="18" fill="#006400"/>
<rect x="445" y="522" width="1" height="21" fill="#006400"/>
<rect x="444" y="529" width="3" height="10" fill="#006400"/>
<rect x="449" y="522" width="1" height="31" fill="#006400"/>
<rect x="448" y="523" width="3" height="23" fill="#006400"/>
<rect x="453" y="541" width="1" height="15" fill="#006400"/>
<rect x="452" y="546" width="3" height="2" fill="#006400"/>
<rect x="457" y="546" width="1" height="23" fill="#006400"/>
<rect x="456" y="548" width="3" height="13" fill="#006400"/>
<rect x="461" y="551" width="1" height="29" fill="#006400"/>
<rect x="460" y="562" width="3" height="14" fill="#006400"/>
<rect x="465" y="532" width="1" height="51" fill="#DC143C"/>
<rect x="464" y="537" width="3" height="41" fill="#DC143C"/>
<rect x="469" y="530" width="1" height="42" fill="#006400"/>
<rect x="468" y="535" width="3" height="23" fill="#006400"/>
<rect x="473" y="536" width="1" height="27" fill="#DC143C"/>
<rect x="472" y="545" width="3" height="13" fill="#DC143C"/>
<rect x="477" y="536" width="1" height="33" fill="#006400"/>
<rect x="476" y="545" width="3" height="21" fill="#006400"/>
<rect x="481" y="556" width="1" height="19" fill="#006400"/>
<rect x="480" y="557" width="3" height="4" fill="#006400"/>
<rect x="485" y="537" width="1" height="43" fill="#DC143C"/>
<rect x="484" y="542" width="3" height="19" fill="#DC143C"/>
<rect x="489" y="527" width="1" height="36" fill="#DC143C"/>
<rect x="488" y="539" width="3" height="2" fill="#DC143C"/>
<rect x="493" y="500" width="1" height="46" fill="#DC143C"/>
<rect x="492" y="526" width="3" height="14" fill="#DC143C"/>
<rect x="497" y="512" width="1" height="29" fill="#DC143C"/>
<rect x="496" y="520" width="3" height="7" fill="#DC143C"/>
<rect x="501" y="518" width="1" height="32" fill="#006400"/>
<rect x="500" y="523" width="3" height="12" fill="#006400"/>
<rect x="505" y="515" width="1" height="35" fill="#DC143C"/>
<rect x="504" y="520" width="3" height="13" fill="#DC143C"/>
<rect x="509" y="511" width="1" height="32" fill="#DC143C"/>
<rect x="508" y="515" width="3" height="5" fill="#DC143C"/>
<rect x="513" y="498" width="1" height="35" fill="#006400"/>
<rect x="512" y="512" width="3" height="11" fill="#006400"/>
<rect x="517" y="502" width="1" height="22" fill="#DC143C"/>
<rect x="516" y="510" width="3" height="13" fill="#DC143C"/>
<rect x="521" y="487" width="1" height="35" fill="#DC143C"/>
<rect x="520" y="493" width="3" height="22" fill="#DC143C"/>
<rect x="525" y="485" width="1" height="32" fill="#006400"/>
<rect x="524" y="489" width="3" height="22" fill="#006400"/>
<rect x="529" y="503" width="1" height="31" fill="#DC143C"/>
<rect x="528" y="504" width="3" height="8" fill="#DC143C"/>
<rect x="533" y="498" width="1" height="20" fill="#006400"/>
<rect x="532" y="504" width="3" height="7" fill="#006400"/>
<rect x="537" y="508" width="1" height="27" fill="#006400"/>
<rect x="536" y="510" width="3" height="13" fill="#006400"/>
<rect x="541" y="517" width="1" height="41" fill="#006400"/>
<rect x="540" y="522" width="3" height="28" fill="#006400"/>
<rect x="545" y="544" width="1" height="19" fill="#006400"/>
<rect x="544" y="551" width="3" height="10" fill="#006400"/>
<rect x="549" y="540" width="1" height="27" fill="#DC143C"/>
<rect x="548" y="542" width="3" height="20" fill="#DC143C"/>
<rect x="553" y="533" width="1" height="26" fill="#006400"/>
<rect x="552" y="539" width="3" height="17" fill="#006400"/>
<rect x="557" y="543" width="1" height="19" fill="#DC143C"/>
<rect x="556" y="553" width="3" height="4" fill="#DC143C"/>
<rect x="561" y="535" width="1" height="35" fill="#006400"/>
<rect x="560" y="553" width="3" height="13" fill="#006400"/>
<rect x="565" y="561" width="1" height="16" fill="#006400"/>
<rect x="564" y="570" width="3" height="6" fill="#006400"/>
<rect x="569" y="559" width="1" height="19" fill="#DC143C"/>
<rect x="568" y="573" width="3" height="2" fill="#DC143C"/>
<rect x="573" y="534" width="1" height="41" fill="#DC143C"/>
<rect x="572" y="535" width="3" height="39" fill="#DC143C"/>
<rect x="577" y="520" width="1" height="24" fill="#DC143C"/>
<rect x="576" y="523" width="3" height="13" fill="#DC143C"/>
<rect x="581" y="518" width="1" height="34" fill="#006400"/>
<rect x="580" y="529" width="3" height="22" fill="#006400"/>
<rect x="585" y="537" width="1" height="25" fill="#006400"/>
<rect x="584" y="550" width="3" height="12" fill="#006400"/>
<rect x="589" y="547" width="1" height="16" fill="#DC143C"/>
<rect x="588" y="550" width="3" height="12" fill="#DC143C"/>
<rect x="593" y="519" width="1" height="32" fill="#DC143C"/>
<rect x="592" y="522" width="3" height="29" fill="#DC143C"/>
<rect x="597" y="519" width="1" height="27" fill="#006400"/>
<rect x="596" y="521" width="3" height="11" fill="#006400"/>
<rect x="601" y="524" width="1" height="25" fill="#006400"/>
<rect x="600" y="532" width="3" height="12" fill="#006400"/>
<rect x="605" y="528" width="1" height="20" fill="#DC143C"/>
<rect x="604" y="535" width="3" height="10" fill="#DC143C"/>
<rect x="609" y="526" width="1" height="24" fill="#006400"/>
<rect x="608" y="533" width="3" height="8" fill="#006400"/>
<rect x="613" y="537" width="1" height="20" fill="#006400"/>
<rect x="612" y="541" width="3" height="11" fill="#006400"/>
<rect x="617" y="534" width="1" height="20" fill="#006400"/>
<rect x="616" y="549" width="3" height="2" fill="#006400"/>
<rect x="621" y="536" width="1" height="32" fill="#006400"/>
<rect x="620" y="551" width="3" height="15" fill="#006400"/>
<rect x="625" y="562" width="1" height="24" fill="#006400"/>
<rect x="624" y="565" width="3" height="21" fill="#006400"/>
<rect x="629" y="582" width="1" height="21" fill="#006400"/>
<rect x="628" y="589" width="3" height="12" fill="#006400"/>
<rect x="633" y="584" width="1" height="33" fill="#006400"/>
<rect x="632" y="601" width="3" height="15" fill="#006400"/>
<rect x="637" y="607" width="1" height="17" fill="#006400"/>
<rect x="636" y="616" width="3" height="5" fill="#006400"/>
<rect x="641" y="611" width="1" height="19" fill="#006400"/>
<rect x="640" y="620" width="3" height="10" fill="#006400"/>
<rect x="645" y="622" width="1" height="33" fill="#006400"/>
<rect x="644" y="630" width="3" height="20" fill="#006400"/>
<rect x="649" y="634" width="1" height="25" fill="#006400"/>
<rect x="648" y="648" width="3" height="9" fill="#006400"/>
<rect x="653" y="623" width="1" height="35" fill="#DC143C"/>
<rect x="652" y="630" width="3" height="27" fill="#DC143C"/>
<rect x="657" y="627" width="1" height="24" fill="#006400"/>
<rect x="656" y="628" width="3" height="6" fill="#006400"/>
<rect x="661" y="633" width="1" height="16" fill="#006400"/>
<rect x="660" y="636" width="3" height="10" fill="#006400"/>
<rect x="665" y="644" width="1" height="16" fill="#006400"/>
<rect x="664" y="646" width="3" height="3" fill="#006400"/>
<rect x="669" y="605" width="1" height="47" fill="#DC143C"/>
<rect x="668" y="609" width="3" height="41" fill="#DC143C"/>
<rect x="673" y="606" width="1" height="23" fill="#006400"/>
<rect x="672" y="608" width="3" height="5" fill="#006400"/>
<rect x="677" y="597" width="1" height="22" fill="#DC143C"/>
<rect x="676" y="608" width="3" height="6" fill="#DC143C"/>
<rect x="681" y="597" width="1" height="19" fill="#DC143C"/>
<rect x="680" y="607" width="3" height="2" fill="#DC143C"/>
<rect x="685" y="584" width="1" height="25" fill="#DC143C"/>
<rect x="684" y="584" width="3" height="21" fill="#DC143C"/>
<rect x="689" y="571" width="1" height="22" fill="#006400"/>
<rect x="688" y="584" width="3" height="1" fill="#006400"/>
<rect x="693" y="586" width="1" height="27" fill="#006400"/>
<rect x="692" y="586" width="3" height="25" fill="#006400"/>
<rect x="697" y="607" width="1" height="27" fill="#006400"/>
<rect x="696" y="609" width="3" height="21" fill="#006400"/>
<rect x="701" y="610" width="1" height="24" fill="#DC143C"/>
<rect x="700" y="623" width="3" height="6" fill="#DC143C"/>
<rect x="705" y="615" width="1" height="27" fill="#006400"/>
<rect x="704" y="622" width="3" height="18" fill="#006400"/>
<rect x="709" y="623" width="1" height="19" fill="#DC143C"/>
<rect x="708" y="627" width="3" height="14" fill="#DC143C"/>
<rect x="713" y="592" width="1" height="36" fill="#DC143C"/>
<rect x="712" y="596" width="3" height="31" fill="#DC143C"/>
<rect x="717" y="587" width="1" height="20" fill="#DC143C"/>
<rect x="716" y="592" width="3" height="4" fill="#DC143C"/>
<rect x="721" y="582" width="1" height="17" fill="#006400"/>
<rect x="720" y="590" width="3" height="8" fill="#006400"/>
<rect x="725" y="577" width="1" height="32" fill="#DC143C"/>
<rect x="724" y="595" width="3" height="3" fill="#DC143C"/>
<rect x="729" y="591" width="1" height="27" fill="#006400"/>
<rect x="728" y="594" width="3" height="19" fill="#006400"/>
<rect x="733" y="597" width="1" height="16" fill="#DC143C"/>
<rect x="732" y="599" width="3" height="13" fill="#DC143C"/>
<rect x="737" y="587" width="1" height="19" fill="#DC143C"/>
<rect x="736" y="589" width="3" height="10" fill="#DC143C"/>
<rect x="741" y="572" width="1" height="28" fill="#DC143C"/>
<rect x="740" y="574" width="3" height="15" fill="#DC143C"/>
<rect x="745" y="563" width="1" height="19" fill="#DC143C"/>
<rect x="744" y="564" width="3" height="10" fill="#DC143C"/>
<rect x="749" y="561" width="1" height="13" fill="#006400"/>
<rect x="748" y="564" width="3" height="5" fill="#006400"/>
<rect x="753" y="542" width="1" height="26" fill="#DC143C"/>
<rect x="752" y="548" width="3" height="19" fill="#DC143C"/>
<rect x="757" y="532" width="1" height="27" fill="#DC143C"/>
<rect x="756" y="534" width="3" height="15" fill="#DC143C"/>
<rect x="761" y="524" width="1" height="22" fill="#006400"/>
<rect x="760" y="533" width="3" height="12" fill="#006400"/>
<rect x="765" y="521" width="1" height="20" fill="#DC143C"/>
<rect x="764" y="529" width="3" height="9" fill="#DC143C"/>
<rect x="769" y="507" width="1" height="31" fill="#DC143C"/>
<rect x="768" y="509" width="3" height="21" fill="#DC143C"/>
<rect x="773" y="502" width="1" height="19" fill="#DC143C"/>
<rect x="772" y="506" width="3" height="3" fill="#DC143C"/>
<rect x="777" y="505" width="1" height="29" fill="#006400"/>
<rect x="776" y="506" width="3" height="5" fill="#006400"/>
<rect x="781" y="498" width="1" height="31" fill="#006400"/>
<rect x="780" y="508" width="3" height="2" fill="#006400"/>
<rect x="785" y="500" width="1" height="23" fill="#006400"/>
<rect x="784" y="508" width="3" height="8" fill="#006400"/>
<rect x="789" y="515" width="1" height="31" fill="#006400"/>
<rect x="788" y="516" width="3" height="25" fill="#006400"/>
<rect x="793" y="534" width="1" height="24" fill="#006400"/>
<rect x="792" y="538" width="3" height="16" fill="#006400"/>
<rect x="797" y="526" width="1" height="30" fill="#DC143C"/>
<rect x="796" y="528" width="3" height="27" fill="#DC143C"/>
<rect x="801" y="525" width="1" height="25" fill="#006400"/>
<rect x="800" y="529" width="3" height="15" fill="#006400"/>
<rect x="805" y="529" width="1" height="45" fill="#006400"/>
<rect x="804" y="543" width="3" height="26" fill="#006400"/>
<rect x="809" y="553" width="1" height="20" fill="#DC143C"/>
<rect x="808" y="557" width="3" height="12" fill="#DC143C"/>
<rect x="813" y="531" width="1" height="27" fill="#DC143C"/>
<rect x="812" y="533" width="3" height="24" fill="#DC143C"/>
<rect x="817" y="513" width="1" height="25" fill="#DC143C"/>
<rect x="816" y="513" width="3" height="16" fill="#DC143C"/>
<rect x="821" y="506" width="1" height="14" fill="#DC143C"/>
<rect x="820" y="512" width="3" height="2" fill="#DC143C"/>
<rect x="825" y="502" width="1" height="34" fill="#006400"/>
<rect x="824" y="512" width="3" height="15" fill="#006400"/>
<rect x="829" y="504" width="1" height="24" fill="#DC143C"/>
<rect x="828" y="519" width="3" height="6" fill="#DC143C"/>
<rect x="833" y="499" width="1" height="26" fill="#DC143C"/>
<rect x="832" y="513" width="3" height="8" fill="#DC143C"/>
<rect x="837" y="510" width="1" height="24" fill="#006400"/>
<rect x="836" y="513" width="3" height="12" fill="#006400"/>
<rect x="841" y="499" width="1" height="29" fill="#DC143C"/>
<rect x="840" y="500" width="3" height="24" fill="#DC143C"/>
<rect x="845" y="491" width="1" height="13" fill="#DC143C"/>
<rect x="844" y="496" width="3" height="3" fill="#DC143C"/>
<rect x="849" y="481" width="1" height="21" fill="#DC143C"/>
<rect x="848" y="494" width="3" height="2" fill="#DC143C"/>
<rect x="853" y="484" width="1" height="18" fill="#DC143C"/>
<rect x="852" y="490" width="3" height="4" fill="#DC143C"/>
<rect x="857" y="485" width="1" height="23" fill="#006400"/>
<rect x="856" y="487" width="3" height="5" fill="#006400"/>
<rect x="861" y="487" width="1" height="23" fill="#006400"/>
<rect x="860" y="489" width="3" height="16" fill="#006400"/>
<rect x="865" y="501" width="1" height="25" fill="#006400"/>
<rect x="864" y="501" width="3" height="15" fill="#006400"/>
<rect x="869" y="491" width="1" height="27" fill="#DC143C"/>
<rect x="868" y="496" width="3" height="21" fill="#DC143C"/>
<rect x="873" y="489" width="1" height="14" fill="#DC143C"/>
<rect x="872" y="494" width="3" height="2" fill="#DC143C"/>
<rect x="877" y="492" width="1" height="42" fill="#006400"/>
<rect x="876" y="494" width="3" height="40" fill="#006400"/>
<rect x="881" y="516" width="1" height="17" fill="#DC143C"/>
<rect x="880" y="527" width="3" height="6" fill="#DC143C"/>
<rect x="885" y="516" width="1" height="15" fill="#DC143C"/>
<rect x="884" y="527" width="3" height="2" fill="#DC143C"/>
<rect x="889" y="519" width="1" height="27" fill="#DC143C"/>
<rect x="888" y="520" width="3" height="9" fill="#DC143C"/>
<rect x="893" y="506" width="1" height="24" fill="#DC143C"/>
<rect x="892" y="511" width="3" height="12" fill="#DC143C"/>
<rect x="897" y="499" width="1" height="16" fill="#DC143C"/>
<rect x="896" y="500" width="3" height="13" fill="#DC143C"/>
<path d="M330 402h2v1h-2zM340 402h4v1h-4zM348 402h4v1h-4zM417 402h3v1h-3zM433 402h2v1h-2zM805 494h3v1h-3zM24 160h3v1h-3zM603 517h4v1h-4zM619 517h3v1h-3zM528 488h2v1h-2zM541 488h3v1h-3zM554 488h3v1h-3zM842 488h2v1h-2zM354 404h2v1h-2zM412 404h3v1h-3zM422 404h9v1h-9zM501 516h2v1h-2zM600 516h3v1h-3zM94 133h2v1h-2zM98 133h2v1h-2zM203 305h2v1h-2zM233 305h4v1h-4zM74 130h15v1h-15zM530 487h3v1h-3zM537 487h4v1h-4zM557 487h4v1h-4zM579 487h2v1h-2zM332 401h2v1h-2zM337 401h3v1h-3zM398 401h2v1h-2zM435 401h2v1h-2zM638 499h3v1h-3zM390 397h2v1h-2zM124 118h2v1h-2zM864 473h2v1h-2zM567 485h8v1h-8zM856 474h2v1h-2zM524 490h2v1h-2zM547 490h3v1h-3zM826 490h7v1h-7zM838 490h3v1h-3zM344 403h4v1h-4zM352 403h2v1h-2zM415 403h2v1h-2zM420 403h2v1h-2zM431 403h2v1h-2zM245 296h3v1h-3zM253 296h8v1h-8zM217 303h13v1h-13zM697 581h20v1h-20zM32 166h6v1h-6zM112 114h2v1h-2zM808 495h5v1h-5zM816 495h2v1h-2zM641 498h2v1h-2zM70 131h4v1h-4zM89 131h3v1h-3zM102 131h2v1h-2zM785 480h6v1h-6zM882 480h13v1h-13zM648 492h2v1h-2zM801 492h2v1h-2zM201 306h2v1h-2zM237 306h3v1h-3zM607 518h12v1h-12zM92 132h2v1h-2zM100 132h2v1h-2zM205 304h12v1h-12zM230 304h3v1h-3zM314 416h3v1h-3zM40 164h2v1h-2zM803 493h2v1h-2zM819 493h2v1h-2zM871 479h2v1h-2zM895 479h3v1h-3zM503 515h2v1h-2zM334 400h3v1h-3zM396 400h2v1h-2zM437 400h2v1h-2zM730 574h3v1h-3zM822 491h4v1h-4zM833 491h5v1h-5zM96 134h2v1h-2zM138 134h2v1h-2zM526 489h2v1h-2zM544 489h3v1h-3zM550 489h4v1h-4zM410 405h2v1h-2zM726 575h4v1h-4zM30 165h2v1h-2zM38 165h2v1h-2zM408 406h2v1h-2zM387 399h2v1h-2zM394 399h2v1h-2zM439 399h2v1h-2zM533 486h4v1h-4zM561 486h6v1h-6zM575 486h4v1h-4zM813 496h3v1h-3zM877 482h3v1h-3zM114 113h2v1h-2zM692 580h5v1h-5zM717 580h2v1h-2zM636 500h2v1h-2zM46 170h4v1h-4zM317 417h2v1h-2zM859 472h5v1h-5zM141 136h2v1h-2zM690 579h2v1h-2zM719 579h2v1h-2zM874 481h3v1h-3zM880 481h2v1h-2zM248 297h5v1h-5zM261 297h2v1h-2zM119 115h2v1h-2zM312 415h2v1h-2zM406 407h2v1h-2zM733 573h2v1h-2zM392 398h2v1h-2zM736 571h2v1h-2zM688 578h2v1h-2zM721 578h2v1h-2zM376 425h2v1h-2zM724 576h2v1h-2zM121 116h2v1h-2zM473 450h2v1h-2zM374 426h2v1h-2zM276 329h2v1h-2zM521 493h1v2h-1zM675 551h1v3h-1zM53 160h1v3h-1zM764 516h1v2h-1zM162 186h1v4h-1zM11 135h1v2h-1zM643 497h1v1h-1zM748 550h1v2h-1zM844 487h1v1h-1zM44 168h1v1h-1zM378 422h1v3h-1zM760 524h1v2h-1zM747 552h1v3h-1zM297 387h1v4h-1zM110 117h1v2h-1zM15 144h1v3h-1zM360 409h1v1h-1zM509 510h1v1h-1zM22 162h1v1h-1zM168 210h1v7h-1zM175 232h1v3h-1zM128 121h1v2h-1zM51 165h1v3h-1zM193 286h1v3h-1zM132 127h1v1h-1zM774 496h1v2h-1zM178 243h1v4h-1zM278 330h1v1h-1zM282 335h1v2h-1zM746 555h1v2h-1zM109 119h1v3h-1zM288 350h1v3h-1zM770 504h1v2h-1zM585 494h1v2h-1zM754 537h1v2h-1zM105 128h1v2h-1zM671 537h1v4h-1zM160 177h1v5h-1zM67 137h1v1h-1zM270 313h1v4h-1zM9 131h1v2h-1zM381 409h1v4h-1zM271 317h1v4h-1zM50 168h1v2h-1zM295 381h1v3h-1zM16 147h1v3h-1zM153 152h1v2h-1zM198 304h1v1h-1zM298 391h1v3h-1zM362 411h1v2h-1zM769 506h1v2h-1zM446 409h1v3h-1zM184 261h1v2h-1zM363 413h1v1h-1zM156 160h1v4h-1zM449 416h1v2h-1zM108 122h1v2h-1zM20 158h1v2h-1zM305 408h1v1h-1zM157 164h1v4h-1zM591 505h1v2h-1zM489 493h1v5h-1zM594 509h1v2h-1zM70 132h1v1h-1zM595 511h1v1h-1zM291 362h1v6h-1zM753 539h1v2h-1zM104 130h1v1h-1zM652 493h1v1h-1zM173 227h1v3h-1zM478 455h1v2h-1zM496 510h1v1h-1zM656 498h1v2h-1zM174 230h1v2h-1zM479 457h1v1h-1zM677 557h1v3h-1zM134 130h1v1h-1zM280 332h1v2h-1zM163 190h1v4h-1zM284 339h1v2h-1zM663 515h1v2h-1zM681 568h1v2h-1zM166 202h1v4h-1zM684 574h1v1h-1zM583 491h1v1h-1zM287 346h1v4h-1zM384 403h1v1h-1zM632 504h1v1h-1zM456 427h1v1h-1zM266 302h1v2h-1zM470 447h1v1h-1zM777 491h1v2h-1zM294 377h1v4h-1zM179 247h1v3h-1zM151 148h1v2h-1zM773 498h1v2h-1zM402 404h1v2h-1zM761 522h1v2h-1zM152 150h1v2h-1zM403 406h1v1h-1zM182 256h1v3h-1zM364 414h1v1h-1zM183 259h1v2h-1zM488 485h1v8h-1zM593 508h1v1h-1zM307 410h1v1h-1zM383 404h1v2h-1zM189 271h1v4h-1zM190 275h1v4h-1zM480 458h1v2h-1zM654 495h1v1h-1zM477 453h1v2h-1zM655 496h1v2h-1zM848 482h1v1h-1zM498 512h1v1h-1zM776 493h1v2h-1zM676 554h1v3h-1zM380 413h1v5h-1zM272 321h1v2h-1zM661 510h1v3h-1zM682 570h1v2h-1zM772 500h1v2h-1zM356 405h1v1h-1zM513 505h1v1h-1zM668 527h1v2h-1zM18 153h1v3h-1zM756 532h1v2h-1zM267 304h1v2h-1zM158 168h1v4h-1zM855 475h1v1h-1zM458 430h1v1h-1zM264 299h1v1h-1zM461 434h1v2h-1zM490 498h1v4h-1zM462 436h1v1h-1zM852 478h1v1h-1zM735 572h1v1h-1zM646 494h1v1h-1zM847 483h1v2h-1zM325 408h1v1h-1zM150 146h1v2h-1zM195 293h1v6h-1zM401 403h1v1h-1zM59 145h1v1h-1zM181 253h1v3h-1zM866 474h1v1h-1zM367 418h1v1h-1zM742 564h1v2h-1zM766 512h1v2h-1zM66 138h1v1h-1zM500 515h1v1h-1zM243 299h1v2h-1zM486 472h1v5h-1zM10 133h1v2h-1zM442 401h1v2h-1zM43 166h1v2h-1zM17 150h1v3h-1zM460 433h1v1h-1zM302 404h1v2h-1zM782 483h1v2h-1zM464 438h1v2h-1zM191 279h1v3h-1zM765 514h1v2h-1zM778 489h1v2h-1zM194 289h1v4h-1zM625 513h1v1h-1zM749 548h1v2h-1zM131 125h1v2h-1zM515 502h1v2h-1zM369 420h1v2h-1zM587 498h1v2h-1zM672 541h1v3h-1zM290 357h1v5h-1zM269 309h1v4h-1zM818 494h1v1h-1zM849 481h1v1h-1zM518 497h1v2h-1zM12 137h1v3h-1zM111 115h1v2h-1zM197 302h1v2h-1zM303 406h1v1h-1zM448 414h1v2h-1zM304 407h1v1h-1zM169 217h1v5h-1zM466 441h1v2h-1zM52 163h1v2h-1zM176 235h1v4h-1zM129 123h1v1h-1zM658 502h1v2h-1zM133 128h1v2h-1zM144 138h1v1h-1zM405 408h1v1h-1zM242 301h1v1h-1zM487 477h1v8h-1zM60 144h1v1h-1zM283 337h1v2h-1zM286 343h1v3h-1zM371 423h1v1h-1zM289 353h1v4h-1zM589 502h1v2h-1zM755 534h1v3h-1zM586 496h1v2h-1zM599 515h1v1h-1zM329 403h1v1h-1zM268 306h1v3h-1zM873 480h1v1h-1zM241 302h1v2h-1zM154 154h1v2h-1zM199 305h1v2h-1zM723 577h1v1h-1zM450 418h1v2h-1zM185 263h1v2h-1zM55 152h1v3h-1zM306 409h1v1h-1zM741 566h1v1h-1zM630 506h1v2h-1zM468 444h1v1h-1zM674 547h1v4h-1zM135 131h1v1h-1zM164 194h1v4h-1zM389 398h1v1h-1zM869 477h1v1h-1zM781 485h1v1h-1zM54 155h1v5h-1zM508 511h1v1h-1zM170 222h1v2h-1zM45 169h1v1h-1zM180 250h1v3h-1zM514 504h1v1h-1zM361 410h1v1h-1zM841 489h1v1h-1zM745 557h1v3h-1zM187 266h1v2h-1zM673 544h1v3h-1zM647 493h1v1h-1zM481 460h1v2h-1zM662 513h1v2h-1zM683 572h1v2h-1zM300 397h1v4h-1zM669 529h1v4h-1zM768 508h1v2h-1zM107 124h1v2h-1zM752 541h1v2h-1zM172 225h1v2h-1zM791 481h1v1h-1zM743 562h1v2h-1zM767 510h1v2h-1zM739 569h1v1h-1zM626 512h1v1h-1zM751 543h1v2h-1zM161 182h1v4h-1zM146 140h1v1h-1zM274 325h1v2h-1zM685 575h1v1h-1zM443 403h1v2h-1zM299 394h1v3h-1zM382 406h1v3h-1zM192 282h1v4h-1zM292 368h1v5h-1zM519 496h1v1h-1zM750 545h1v3h-1zM660 507h1v3h-1zM365 415h1v1h-1zM793 484h1v1h-1zM167 206h1v4h-1zM366 416h1v2h-1zM308 411h1v1h-1zM670 533h1v4h-1zM309 412h1v1h-1zM385 401h1v2h-1zM598 514h1v1h-1zM507 512h1v1h-1zM492 504h1v2h-1zM137 133h1v1h-1zM441 400h1v1h-1zM686 576h1v1h-1zM846 485h1v1h-1zM687 577h1v1h-1zM58 146h1v2h-1zM452 421h1v2h-1zM463 437h1v1h-1zM467 443h1v1h-1zM65 139h1v1h-1zM679 562h1v3h-1zM322 411h1v1h-1zM165 198h1v4h-1zM665 519h1v3h-1zM867 475h1v1h-1zM368 419h1v1h-1zM795 486h1v1h-1zM57 148h1v2h-1zM868 476h1v1h-1zM310 413h1v1h-1zM631 505h1v1h-1zM311 414h1v1h-1zM744 560h1v2h-1zM491 502h1v2h-1zM63 141h1v1h-1zM740 567h1v2h-1zM326 407h1v1h-1zM296 384h1v3h-1zM279 331h1v1h-1zM379 418h1v4h-1zM155 156h1v4h-1zM635 501h1v1h-1zM451 420h1v1h-1zM454 424h1v2h-1zM186 265h1v1h-1zM738 570h1v1h-1zM469 445h1v2h-1zM483 464h1v2h-1zM657 500h1v2h-1zM763 518h1v2h-1zM678 560h1v2h-1zM622 516h1v1h-1zM664 517h1v2h-1zM285 341h1v2h-1zM759 526h1v2h-1zM28 163h1v1h-1zM870 478h1v1h-1zM588 500h1v2h-1zM523 491h1v1h-1zM475 451h1v1h-1zM177 239h1v4h-1zM762 520h1v2h-1zM584 492h1v2h-1zM758 528h1v2h-1zM511 507h1v2h-1zM188 268h1v3h-1zM263 298h1v1h-1zM506 513h1v1h-1zM853 477h1v1h-1zM471 448h1v1h-1zM485 468h1v4h-1zM659 504h1v3h-1zM850 480h1v1h-1zM328 404h1v1h-1zM482 462h1v2h-1zM145 139h1v1h-1zM116 112h1v1h-1zM273 323h1v2h-1zM644 496h1v1h-1zM845 486h1v1h-1zM149 144h1v2h-1zM323 410h1v1h-1zM372 424h1v1h-1zM445 407h1v2h-1zM19 156h1v2h-1zM159 172h1v5h-1zM69 133h1v2h-1zM821 492h1v1h-1zM64 140h1v1h-1zM140 135h1v1h-1zM327 405h1v2h-1zM200 307h1v1h-1zM357 406h1v1h-1zM792 482h1v2h-1zM106 126h1v2h-1zM780 486h1v1h-1zM68 135h1v2h-1zM136 132h1v1h-1zM275 327h1v2h-1zM147 141h1v1h-1zM196 299h1v3h-1zM623 515h1v1h-1zM14 142h1v2h-1zM148 142h1v2h-1zM798 489h1v1h-1zM444 405h1v2h-1zM634 502h1v1h-1zM386 400h1v1h-1zM629 508h1v1h-1zM171 224h1v1h-1zM505 514h1v1h-1zM779 487h1v2h-1zM775 495h1v1h-1zM516 500h1v2h-1zM667 524h1v3h-1zM771 502h1v2h-1zM493 506h1v2h-1zM127 120h1v1h-1zM13 140h1v2h-1zM800 491h1v1h-1zM23 161h1v1h-1zM858 473h1v1h-1zM123 117h1v1h-1zM680 565h1v3h-1zM42 165h1v1h-1zM666 522h1v2h-1zM301 401h1v3h-1zM27 161h1v2h-1zM590 504h1v1h-1zM651 492h1v1h-1zM494 508h1v1h-1zM495 509h1v1h-1zM293 373h1v4h-1zM130 124h1v1h-1zM582 489h1v2h-1zM56 150h1v2h-1zM784 481h1v1h-1zM465 440h1v1h-1zM627 510h1v2h-1zM484 466h1v2h-1zM143 137h1v1h-1zM359 408h1v1h-1zM794 485h1v1h-1zM512 506h1v1h-1zM370 422h1v1h-1zM447 412h1v2h-1zM21 160h1v2h-1zM592 507h1v1h-1zM851 479h1v1h-1zM653 494h1v1h-1zM520 495h1v1h-1zM645 495h1v1h-1zM281 334h1v1h-1zM321 412h1v1h-1zM581 488h1v1h-1zM453 423h1v1h-1zM457 428h1v2h-1zM62 142h1v1h-1zM244 297h1v2h-1zM400 402h1v1h-1zM796 487h1v1h-1zM797 488h1v1h-1zM240 304h1v2h-1zM320 413h1v2h-1zM757 530h1v2h-1zM373 425h1v1h-1zM499 513h1v2h-1zM624 514h1v1h-1zM455 426h1v1h-1zM319 415h1v2h-1zM459 431h1v2h-1zM265 300h1v2h-1zM517 499h1v1h-1zM126 119h1v1h-1zM29 164h1v1h-1zM799 490h1v1h-1zM783 482h1v1h-1zM510 509h1v1h-1zM596 512h1v1h-1zM597 513h1v1h-1zM476 452h1v1h-1zM497 511h1v1h-1zM472 449h1v1h-1zM650 491h1v1h-1zM117 113h1v1h-1zM404 407h1v1h-1zM854 476h1v1h-1zM61 143h1v1h-1zM324 409h1v1h-1zM358 407h1v1h-1zM633 503h1v1h-1zM522 492h1v1h-1zM628 509h1v1h-1zM118 114h1v1h-1z" fill="#A9DCE3"/>
<path d="M310 445h3v1h-3zM494 546h4v1h-4zM591 546h4v1h-4zM558 530h2v1h-2zM818 530h5v1h-5zM533 527h2v1h-2zM553 527h2v1h-2zM842 527h2v1h-2zM551 526h2v1h-2zM844 526h3v1h-3zM357 469h2v1h-2zM331 460h2v1h-2zM605 549h7v1h-7zM619 549h6v1h-6zM699 623h8v1h-8zM85 171h5v1h-5zM103 171h2v1h-2zM202 338h17v1h-17zM69 176h2v1h-2zM227 340h4v1h-4zM683 620h4v1h-4zM599 548h6v1h-6zM612 548h7v1h-7zM317 448h2v1h-2zM404 448h5v1h-5zM79 172h6v1h-6zM531 528h2v1h-2zM828 528h5v1h-5zM838 528h4v1h-4zM538 524h11v1h-11zM849 524h2v1h-2zM570 537h2v1h-2zM797 537h2v1h-2zM741 601h2v1h-2zM93 169h2v1h-2zM98 169h3v1h-3zM512 542h2v1h-2zM581 542h2v1h-2zM853 522h2v1h-2zM233 342h2v1h-2zM575 539h2v1h-2zM793 539h2v1h-2zM737 603h2v1h-2zM219 339h8v1h-8zM346 467h7v1h-7zM384 467h2v1h-2zM874 508h9v1h-9zM894 508h4v1h-4zM523 534h2v1h-2zM565 534h2v1h-2zM808 534h3v1h-3zM32 205h5v1h-5zM872 509h2v1h-2zM883 509h11v1h-11zM687 621h5v1h-5zM711 621h2v1h-2zM577 540h2v1h-2zM791 540h2v1h-2zM320 450h2v1h-2zM399 450h2v1h-2zM413 450h4v1h-4zM313 446h2v1h-2zM692 622h7v1h-7zM707 622h4v1h-4zM20 201h2v1h-2zM625 550h4v1h-4zM803 535h5v1h-5zM858 519h2v1h-2zM813 532h2v1h-2zM306 444h4v1h-4zM721 613h2v1h-2zM527 531h2v1h-2zM560 531h2v1h-2zM815 531h3v1h-3zM10 195h2v1h-2zM563 533h2v1h-2zM811 533h2v1h-2zM862 516h2v1h-2zM730 606h2v1h-2zM505 544h5v1h-5zM585 544h2v1h-2zM22 202h3v1h-3zM42 202h2v1h-2zM514 541h2v1h-2zM579 541h2v1h-2zM336 463h2v1h-2zM16 199h2v1h-2zM365 473h2v1h-2zM376 473h2v1h-2zM629 551h2v1h-2zM498 545h7v1h-7zM587 545h4v1h-4zM18 200h2v1h-2zM568 536h2v1h-2zM799 536h4v1h-4zM363 472h2v1h-2zM73 174h2v1h-2zM194 335h3v1h-3zM632 553h2v1h-2zM510 543h2v1h-2zM583 543h2v1h-2zM75 173h4v1h-4zM106 173h2v1h-2zM339 465h2v1h-2zM29 204h3v1h-3zM37 204h4v1h-4zM361 471h2v1h-2zM379 471h2v1h-2zM747 597h2v1h-2zM293 434h2v1h-2zM556 529h2v1h-2zM823 529h5v1h-5zM833 529h5v1h-5zM353 468h4v1h-4zM518 538h2v1h-2zM572 538h3v1h-3zM795 538h2v1h-2zM401 449h3v1h-3zM409 449h4v1h-4zM536 525h2v1h-2zM549 525h2v1h-2zM847 525h2v1h-2zM715 618h2v1h-2zM25 203h4v1h-4zM63 180h2v1h-2zM680 619h3v1h-3zM95 168h3v1h-3zM726 609h2v1h-2zM367 474h9v1h-9zM90 170h3v1h-3zM101 170h2v1h-2zM734 604h3v1h-3zM423 454h2v1h-2zM341 466h5v1h-5zM419 452h2v1h-2zM856 520h2v1h-2zM200 337h2v1h-2zM14 198h2v1h-2zM304 443h2v1h-2zM867 512h2v1h-2zM421 453h2v1h-2zM417 451h2v1h-2zM732 605h2v1h-2zM231 341h2v1h-2zM333 461h2v1h-2zM315 447h2v1h-2zM595 547h4v1h-4zM300 440h2v1h-2zM743 600h2v1h-2zM71 175h2v1h-2zM59 183h2v1h-2zM870 510h2v1h-2zM739 602h2v1h-2zM197 336h3v1h-3zM851 523h2v1h-2zM192 334h2v1h-2zM67 177h2v1h-2zM359 470h2v1h-2zM641 563h1v1h-1zM670 608h1v1h-1zM163 292h1v2h-1zM438 469h1v2h-1zM652 578h1v2h-1zM292 433h1v1h-1zM303 442h1v1h-1zM663 596h1v2h-1zM758 586h1v1h-1zM130 209h1v3h-1zM442 475h1v1h-1zM656 584h1v2h-1zM138 229h1v3h-1zM55 187h1v1h-1zM258 376h1v2h-1zM677 616h1v1h-1zM159 280h1v3h-1zM393 456h1v2h-1zM555 528h1v1h-1zM112 178h1v1h-1zM789 542h1v1h-1zM144 244h1v3h-1zM255 370h1v2h-1zM430 460h1v1h-1zM162 290h1v2h-1zM124 196h1v2h-1zM284 423h1v2h-1zM746 598h1v1h-1zM165 296h1v1h-1zM252 364h1v2h-1zM181 322h1v2h-1zM155 269h1v3h-1zM145 247h1v2h-1zM273 405h1v1h-1zM302 441h1v1h-1zM166 297h1v2h-1zM750 595h1v1h-1zM187 329h1v1h-1zM266 392h1v2h-1zM655 583h1v1h-1zM269 398h1v2h-1zM658 588h1v1h-1zM666 601h1v2h-1zM761 582h1v2h-1zM188 330h1v1h-1zM134 219h1v3h-1zM445 479h1v2h-1zM651 576h1v2h-1zM659 589h1v2h-1zM516 540h1v1h-1zM152 262h1v2h-1zM446 481h1v1h-1zM467 513h1v2h-1zM449 485h1v2h-1zM66 178h1v1h-1zM126 200h1v3h-1zM778 554h1v1h-1zM247 357h1v1h-1zM158 277h1v3h-1zM176 315h1v1h-1zM471 519h1v1h-1zM718 616h1v1h-1zM298 438h1v1h-1zM481 531h1v2h-1zM251 362h1v2h-1zM180 320h1v2h-1zM50 193h1v1h-1zM328 457h1v1h-1zM272 403h1v2h-1zM161 287h1v3h-1zM133 217h1v2h-1zM123 194h1v2h-1zM482 533h1v1h-1zM640 561h1v2h-1zM669 606h1v2h-1zM757 587h1v2h-1zM265 390h1v2h-1zM644 567h1v1h-1zM489 541h1v1h-1zM673 612h1v1h-1zM389 462h1v2h-1zM764 577h1v2h-1zM441 473h1v2h-1zM535 526h1v1h-1zM470 518h1v1h-1zM239 347h1v1h-1zM452 490h1v2h-1zM140 234h1v3h-1zM151 260h1v2h-1zM240 348h1v1h-1zM781 550h1v1h-1zM108 174h1v1h-1zM254 368h1v2h-1zM137 227h1v2h-1zM283 421h1v2h-1zM250 361h1v1h-1zM276 409h1v2h-1zM179 318h1v2h-1zM639 560h1v1h-1zM119 187h1v2h-1zM279 414h1v2h-1zM287 427h1v2h-1zM132 214h1v3h-1zM268 396h1v2h-1zM434 464h1v2h-1zM115 181h1v1h-1zM444 478h1v1h-1zM672 611h1v1h-1zM154 267h1v2h-1zM448 484h1v1h-1zM456 496h1v2h-1zM469 516h1v2h-1zM139 232h1v2h-1zM297 437h1v1h-1zM46 199h1v1h-1zM49 194h1v2h-1zM473 522h1v1h-1zM679 618h1v1h-1zM788 543h1v1h-1zM426 456h1v1h-1zM125 198h1v2h-1zM253 366h1v2h-1zM182 324h1v1h-1zM114 180h1v1h-1zM146 249h1v3h-1zM122 192h1v2h-1zM282 419h1v2h-1zM143 242h1v2h-1zM480 530h1v1h-1zM12 196h1v1h-1zM183 325h1v1h-1zM267 394h1v2h-1zM643 565h1v2h-1zM275 408h1v1h-1zM760 584h1v1h-1zM118 185h1v2h-1zM286 426h1v1h-1zM264 388h1v2h-1zM338 464h1v1h-1zM57 185h1v1h-1zM433 463h1v1h-1zM668 604h1v2h-1zM160 283h1v4h-1zM189 331h1v1h-1zM61 182h1v1h-1zM153 264h1v3h-1zM447 482h1v2h-1zM392 458h1v1h-1zM864 515h1v1h-1zM395 454h1v1h-1zM767 572h1v2h-1zM190 332h1v1h-1zM261 382h1v2h-1zM724 611h1v1h-1zM713 620h1v1h-1zM323 452h1v1h-1zM717 617h1v1h-1zM745 599h1v1h-1zM136 224h1v3h-1zM157 275h1v2h-1zM249 359h1v2h-1zM178 317h1v1h-1zM278 413h1v1h-1zM281 417h1v2h-1zM271 401h1v2h-1zM642 564h1v1h-1zM274 406h1v2h-1zM671 609h1v2h-1zM378 472h1v1h-1zM783 548h1v1h-1zM646 569h1v2h-1zM235 343h1v1h-1zM65 179h1v1h-1zM490 542h1v1h-1zM443 476h1v2h-1zM451 488h1v2h-1zM472 520h1v2h-1zM454 493h1v2h-1zM728 608h1v1h-1zM319 449h1v1h-1zM491 543h1v1h-1zM150 258h1v2h-1zM260 380h1v2h-1zM752 593h1v1h-1zM322 451h1v1h-1zM242 350h1v2h-1zM52 190h1v1h-1zM156 272h1v3h-1zM277 411h1v2h-1zM522 535h1v1h-1zM121 190h1v2h-1zM329 458h1v1h-1zM774 560h1v2h-1zM483 534h1v1h-1zM763 579h1v1h-1zM142 239h1v3h-1zM131 212h1v2h-1zM435 466h1v1h-1zM330 459h1v1h-1zM289 430h1v1h-1zM382 469h1v1h-1zM263 386h1v2h-1zM436 467h1v1h-1zM520 537h1v1h-1zM41 203h1v1h-1zM386 466h1v1h-1zM674 613h1v1h-1zM450 487h1v1h-1zM770 568h1v1h-1zM458 499h1v2h-1zM461 504h1v2h-1zM149 256h1v2h-1zM241 349h1v1h-1zM110 176h1v1h-1zM299 439h1v1h-1zM476 525h1v2h-1zM428 458h1v1h-1zM634 554h1v1h-1zM766 574h1v2h-1zM866 513h1v1h-1zM135 222h1v2h-1zM117 183h1v2h-1zM56 186h1v1h-1zM120 189h1v1h-1zM790 541h1v1h-1zM288 429h1v1h-1zM185 327h1v1h-1zM645 568h1v1h-1zM719 615h1v1h-1zM262 384h1v2h-1zM453 492h1v1h-1zM48 196h1v1h-1zM649 573h1v2h-1zM457 498h1v1h-1zM427 457h1v1h-1zM109 175h1v1h-1zM759 585h1v1h-1zM762 580h1v2h-1zM170 305h1v2h-1zM280 416h1v1h-1zM475 524h1v1h-1zM397 452h1v1h-1zM184 326h1v1h-1zM754 591h1v1h-1zM116 182h1v1h-1zM394 455h1v1h-1zM855 521h1v1h-1zM51 191h1v2h-1zM648 572h1v1h-1zM148 254h1v2h-1zM259 378h1v2h-1zM191 333h1v1h-1zM474 523h1v1h-1zM243 352h1v1h-1zM172 309h1v2h-1zM324 453h1v1h-1zM244 353h1v1h-1zM173 311h1v1h-1zM325 454h1v1h-1zM13 197h1v1h-1zM637 557h1v2h-1zM782 549h1v1h-1zM47 197h1v2h-1zM381 470h1v1h-1zM777 555h1v2h-1zM141 237h1v2h-1zM769 569h1v2h-1zM723 612h1v1h-1zM54 188h1v1h-1zM105 172h1v1h-1zM459 501h1v2h-1zM236 344h1v1h-1zM460 503h1v1h-1zM562 532h1v1h-1zM147 252h1v2h-1zM492 544h1v1h-1zM335 462h1v1h-1zM749 596h1v1h-1zM773 562h1v2h-1zM785 546h1v1h-1zM493 545h1v1h-1zM9 194h1v1h-1zM169 303h1v2h-1zM765 576h1v1h-1zM388 464h1v1h-1zM647 571h1v1h-1zM485 536h1v1h-1zM455 495h1v1h-1zM463 507h1v2h-1zM861 517h1v1h-1zM477 527h1v1h-1zM111 177h1v1h-1zM391 459h1v2h-1zM776 557h1v2h-1zM168 301h1v2h-1zM636 556h1v1h-1zM526 532h1v1h-1zM484 535h1v1h-1zM753 592h1v1h-1zM290 431h1v1h-1zM530 529h1v1h-1zM661 593h1v2h-1zM437 468h1v1h-1zM780 551h1v1h-1zM45 200h1v1h-1zM654 581h1v2h-1zM662 595h1v1h-1zM675 614h1v1h-1zM772 564h1v2h-1zM665 600h1v1h-1zM129 207h1v2h-1zM462 506h1v1h-1zM257 374h1v2h-1zM676 615h1v1h-1zM58 184h1v1h-1zM171 307h1v2h-1zM466 512h1v1h-1zM62 181h1v1h-1zM756 589h1v1h-1zM865 514h1v1h-1zM396 453h1v1h-1zM246 355h1v2h-1zM175 313h1v2h-1zM725 610h1v1h-1zM429 459h1v1h-1zM635 555h1v1h-1zM714 619h1v1h-1zM164 294h1v2h-1zM869 511h1v1h-1zM729 607h1v1h-1zM327 456h1v1h-1zM186 328h1v1h-1zM657 586h1v2h-1zM787 544h1v1h-1zM487 538h1v2h-1zM650 575h1v1h-1zM465 510h1v2h-1zM653 580h1v1h-1zM488 540h1v1h-1zM128 205h1v2h-1zM440 472h1v1h-1zM256 372h1v2h-1zM784 547h1v1h-1zM383 468h1v1h-1zM779 552h1v2h-1zM326 455h1v1h-1zM768 571h1v1h-1zM53 189h1v1h-1zM664 598h1v2h-1zM751 594h1v1h-1zM660 591h1v2h-1zM631 552h1v1h-1zM517 539h1v1h-1zM127 203h1v2h-1zM295 435h1v1h-1zM245 354h1v1h-1zM521 536h1v1h-1zM174 312h1v1h-1zM296 436h1v1h-1zM387 465h1v1h-1zM390 461h1v1h-1zM771 566h1v2h-1zM167 299h1v2h-1zM525 533h1v1h-1zM638 559h1v1h-1zM567 535h1v1h-1zM486 537h1v1h-1zM44 201h1v1h-1zM439 471h1v1h-1zM237 345h1v1h-1zM398 451h1v1h-1zM667 603h1v1h-1zM238 346h1v1h-1zM464 509h1v1h-1zM860 518h1v1h-1zM720 614h1v1h-1zM775 559h1v1h-1zM755 590h1v1h-1zM678 617h1v1h-1zM468 515h1v1h-1zM425 455h1v1h-1zM478 528h1v1h-1zM529 530h1v1h-1zM479 529h1v1h-1zM248 358h1v1h-1zM177 316h1v1h-1zM431 461h1v1h-1zM285 425h1v1h-1zM113 179h1v1h-1zM432 462h1v1h-1zM786 545h1v1h-1zM270 400h1v1h-1zM291 432h1v1h-1z" fill="#A9DCE3"/>
<path d="M731 638h8v1h-8zM597 581h4v1h-4zM96 202h2v1h-2zM570 587h4v1h-4zM584 587h4v1h-4zM861 563h2v1h-2zM198 370h8v1h-8zM211 370h3v1h-3zM814 567h2v1h-2zM842 567h2v1h-2zM538 561h2v1h-2zM552 562h2v1h-2zM690 663h6v1h-6zM812 568h2v1h-2zM844 568h4v1h-4zM853 568h3v1h-3zM513 578h8v1h-8zM615 578h5v1h-5zM165 395h3v1h-3zM826 565h7v1h-7zM542 559h3v1h-3zM745 642h2v1h-2zM368 524h4v1h-4zM376 524h2v1h-2zM595 582h2v1h-2zM171 393h6v1h-6zM540 560h2v1h-2zM545 560h6v1h-6zM601 580h6v1h-6zM416 502h2v1h-2zM287 503h2v1h-2zM418 503h3v1h-3zM364 526h2v1h-2zM670 683h2v1h-2zM161 397h2v1h-2zM777 629h2v1h-2zM588 586h2v1h-2zM224 374h4v1h-4zM875 535h5v1h-5zM593 583h2v1h-2zM91 205h2v1h-2zM354 530h3v1h-3zM381 530h2v1h-2zM816 566h10v1h-10zM833 566h9v1h-9zM857 566h2v1h-2zM574 588h10v1h-10zM481 600h2v1h-2zM309 474h4v1h-4zM70 221h2v1h-2zM49 224h6v1h-6zM64 224h2v1h-2zM753 648h2v1h-2zM884 538h10v1h-10zM714 656h2v1h-2zM524 572h2v1h-2zM498 576h2v1h-2zM506 576h2v1h-2zM683 666h2v1h-2zM702 666h3v1h-3zM30 244h5v1h-5zM342 529h2v1h-2zM357 529h2v1h-2zM383 529h2v1h-2zM23 245h7v1h-7zM742 640h2v1h-2zM502 574h2v1h-2zM493 579h2v1h-2zM607 579h8v1h-8zM177 392h5v1h-5zM206 369h5v1h-5zM75 219h2v1h-2zM496 577h2v1h-2zM508 577h5v1h-5zM77 218h3v1h-3zM59 226h3v1h-3zM350 531h4v1h-4zM72 220h3v1h-3zM590 585h2v1h-2zM305 476h2v1h-2zM315 476h2v1h-2zM483 599h2v1h-2zM274 489h2v1h-2zM362 527h2v1h-2zM307 475h2v1h-2zM313 475h2v1h-2zM757 650h2v1h-2zM882 537h2v1h-2zM894 537h2v1h-2zM673 681h2v1h-2zM500 575h2v1h-2zM504 575h2v1h-2zM686 664h4v1h-4zM696 664h4v1h-4zM359 528h3v1h-3zM385 528h2v1h-2zM366 525h2v1h-2zM221 375h3v1h-3zM94 203h2v1h-2zM427 506h2v1h-2zM217 372h2v1h-2zM230 372h2v1h-2zM168 394h3v1h-3zM214 371h3v1h-3zM534 564h2v1h-2zM668 684h2v1h-2zM729 639h2v1h-2zM739 639h3v1h-3zM700 665h2v1h-2zM38 242h2v1h-2zM750 646h2v1h-2zM848 569h5v1h-5zM285 504h2v1h-2zM421 504h3v1h-3zM68 222h2v1h-2zM880 536h2v1h-2zM896 536h2v1h-2zM424 505h3v1h-3zM809 570h2v1h-2zM55 225h4v1h-4zM62 225h2v1h-2zM18 246h5v1h-5zM775 630h2v1h-2zM35 243h3v1h-3zM163 396h2v1h-2zM779 628h2v1h-2zM80 217h2v1h-2zM372 523h4v1h-4zM228 373h2v1h-2zM66 223h2v1h-2zM526 571h2v1h-2zM807 571h2v1h-2zM661 680h2v1h-2zM755 649h2v1h-2zM759 649h2v1h-2zM407 493h2v1h-2zM346 532h4v1h-4zM257 447h1v4h-1zM328 506h1v3h-1zM447 544h1v2h-1zM132 303h1v3h-1zM621 580h1v2h-1zM331 513h1v2h-1zM788 609h1v3h-1zM243 398h1v3h-1zM114 253h1v3h-1zM625 586h1v2h-1zM135 312h1v3h-1zM643 640h1v4h-1zM554 563h1v1h-1zM247 411h1v3h-1zM121 272h1v2h-1zM454 560h1v2h-1zM796 588h1v3h-1zM149 369h1v4h-1zM395 510h1v2h-1zM455 562h1v2h-1zM487 592h1v3h-1zM151 378h1v5h-1zM323 490h1v3h-1zM127 287h1v4h-1zM635 614h1v4h-1zM410 495h1v1h-1zM433 514h1v2h-1zM239 384h1v3h-1zM391 518h1v2h-1zM411 496h1v1h-1zM110 237h1v4h-1zM462 577h1v2h-1zM242 395h1v3h-1zM660 679h1v1h-1zM142 344h1v3h-1zM744 641h1v1h-1zM865 557h1v3h-1zM144 351h1v3h-1zM145 354h1v3h-1zM297 486h1v3h-1zM337 524h1v1h-1zM491 582h1v2h-1zM786 614h1v3h-1zM262 465h1v3h-1zM103 212h1v3h-1zM564 579h1v2h-1zM795 591h1v2h-1zM266 477h1v2h-1zM537 562h1v1h-1zM763 645h1v2h-1zM84 213h1v2h-1zM326 499h1v4h-1zM252 432h1v4h-1zM406 492h1v1h-1zM284 503h1v1h-1zM439 526h1v2h-1zM479 598h1v1h-1zM390 520h1v2h-1zM329 509h1v2h-1zM220 374h1v1h-1zM774 631h1v1h-1zM330 511h1v2h-1zM495 578h1v1h-1zM864 560h1v2h-1zM641 632h1v4h-1zM713 657h1v1h-1zM446 542h1v2h-1zM131 300h1v3h-1zM116 258h1v2h-1zM623 583h1v1h-1zM99 205h1v1h-1zM344 530h1v1h-1zM296 489h1v2h-1zM490 584h1v3h-1zM556 565h1v2h-1zM624 584h1v2h-1zM708 663h1v1h-1zM630 600h1v3h-1zM40 239h1v2h-1zM453 558h1v2h-1zM148 365h1v4h-1zM106 221h1v3h-1zM781 625h1v2h-1zM292 497h1v2h-1zM126 284h1v3h-1zM868 548h1v3h-1zM431 510h1v2h-1zM238 382h1v2h-1zM762 647h1v1h-1zM413 498h1v2h-1zM432 512h1v2h-1zM464 581h1v1h-1zM157 392h1v2h-1zM83 215h1v1h-1zM255 442h1v3h-1zM143 347h1v4h-1zM442 532h1v3h-1zM790 604h1v3h-1zM258 451h1v4h-1zM17 247h1v1h-1zM798 583h1v3h-1zM339 526h1v1h-1zM261 462h1v3h-1zM295 491h1v2h-1zM449 549h1v2h-1zM562 575h1v2h-1zM565 581h1v1h-1zM250 423h1v5h-1zM644 644h1v4h-1zM139 326h1v7h-1zM566 582h1v1h-1zM647 656h1v3h-1zM322 487h1v3h-1zM291 499h1v2h-1zM650 665h1v2h-1zM653 670h1v2h-1zM325 495h1v4h-1zM867 551h1v3h-1zM654 672h1v1h-1zM719 652h1v1h-1zM111 241h1v4h-1zM112 245h1v4h-1zM640 629h1v3h-1zM183 389h1v2h-1zM146 357h1v4h-1zM523 573h1v2h-1zM558 568h1v1h-1zM105 218h1v3h-1zM530 568h1v1h-1zM415 501h1v1h-1zM254 439h1v3h-1zM47 226h1v2h-1zM441 530h1v2h-1zM768 638h1v1h-1zM43 233h1v2h-1zM448 546h1v3h-1zM568 585h1v1h-1zM870 541h1v4h-1zM320 482h1v2h-1zM792 599h1v2h-1zM656 675h1v1h-1zM403 494h1v2h-1zM638 624h1v3h-1zM387 526h1v2h-1zM399 501h1v2h-1zM42 235h1v2h-1zM767 639h1v2h-1zM263 468h1v3h-1zM88 208h1v2h-1zM782 623h1v2h-1zM269 484h1v1h-1zM648 659h1v3h-1zM721 650h1v1h-1zM270 485h1v1h-1zM468 586h1v2h-1zM141 339h1v5h-1zM663 681h1v1h-1zM803 575h1v2h-1zM402 496h1v2h-1zM113 249h1v4h-1zM712 658h1v1h-1zM134 309h1v3h-1zM333 517h1v2h-1zM799 581h1v2h-1zM627 591h1v3h-1zM378 525h1v1h-1zM398 503h1v2h-1zM137 318h1v3h-1zM248 414h1v4h-1zM631 603h1v3h-1zM87 210h1v1h-1zM109 233h1v4h-1zM193 376h1v2h-1zM82 216h1v1h-1zM188 383h1v1h-1zM658 677h1v1h-1zM435 518h1v2h-1zM789 607h1v2h-1zM397 505h1v2h-1zM196 372h1v2h-1zM251 428h1v4h-1zM9 258h1v1h-1zM153 386h1v2h-1zM302 479h1v1h-1zM283 501h1v2h-1zM477 596h1v1h-1zM187 384h1v2h-1zM665 683h1v1h-1zM299 482h1v2h-1zM133 306h1v3h-1zM681 668h1v2h-1zM332 515h1v2h-1zM244 401h1v3h-1zM118 262h1v3h-1zM626 588h1v3h-1zM136 315h1v3h-1zM101 208h1v2h-1zM785 617h1v2h-1zM434 516h1v2h-1zM772 633h1v1h-1zM680 670h1v2h-1zM706 665h1v2h-1zM726 643h1v1h-1zM676 677h1v2h-1zM152 383h1v3h-1zM128 291h1v3h-1zM117 260h1v2h-1zM100 206h1v2h-1zM705 667h1v1h-1zM725 644h1v2h-1zM720 651h1v1h-1zM802 577h1v1h-1zM443 535h1v2h-1zM259 455h1v4h-1zM521 576h1v2h-1zM14 250h1v1h-1zM234 375h1v1h-1zM567 583h1v2h-1zM272 487h1v1h-1zM192 378h1v1h-1zM123 277h1v2h-1zM394 512h1v2h-1zM486 595h1v2h-1zM10 256h1v2h-1zM241 391h1v4h-1zM48 225h1v1h-1zM655 673h1v2h-1zM98 203h1v2h-1zM555 564h1v1h-1zM393 514h1v2h-1zM485 597h1v2h-1zM268 482h1v2h-1zM463 579h1v2h-1zM536 563h1v1h-1zM466 584h1v1h-1zM866 554h1v3h-1zM467 585h1v1h-1zM389 522h1v2h-1zM784 619h1v2h-1zM707 664h1v1h-1zM321 484h1v3h-1zM125 281h1v3h-1zM39 241h1v1h-1zM632 606h1v2h-1zM122 274h1v3h-1zM804 574h1v1h-1zM667 685h1v1h-1zM240 387h1v4h-1zM657 676h1v1h-1zM492 580h1v2h-1zM710 660h1v2h-1zM679 672h1v1h-1zM260 459h1v3h-1zM869 545h1v3h-1zM783 621h1v2h-1zM675 679h1v2h-1zM649 662h1v3h-1zM791 601h1v3h-1zM327 503h1v3h-1zM642 636h1v4h-1zM450 551h1v2h-1zM379 526h1v2h-1zM138 321h1v5h-1zM724 646h1v1h-1zM457 566h1v2h-1zM529 569h1v1h-1zM620 579h1v1h-1zM559 569h1v2h-1zM794 593h1v3h-1zM191 379h1v1h-1zM140 333h1v6h-1zM409 494h1v1h-1zM471 590h1v1h-1zM130 297h1v3h-1zM773 632h1v1h-1zM637 621h1v3h-1zM150 373h1v5h-1zM456 564h1v2h-1zM276 490h1v1h-1zM405 491h1v1h-1zM438 524h1v2h-1zM873 537h1v1h-1zM401 498h1v1h-1zM298 484h1v2h-1zM622 582h1v1h-1zM711 659h1v1h-1zM489 587h1v3h-1zM232 373h1v1h-1zM723 647h1v2h-1zM233 374h1v1h-1zM271 486h1v1h-1zM236 378h1v2h-1zM718 653h1v1h-1zM664 682h1v1h-1zM156 391h1v1h-1zM129 294h1v3h-1zM636 618h1v3h-1zM473 592h1v1h-1zM334 519h1v1h-1zM522 575h1v1h-1zM338 525h1v1h-1zM15 249h1v1h-1zM93 204h1v1h-1zM488 590h1v2h-1zM811 569h1v1h-1zM107 224h1v4h-1zM277 491h1v1h-1zM278 492h1v2h-1zM659 678h1v1h-1zM281 497h1v2h-1zM436 520h1v2h-1zM465 582h1v2h-1zM256 445h1v2h-1zM186 386h1v1h-1zM856 567h1v1h-1zM120 269h1v3h-1zM645 648h1v4h-1zM249 418h1v5h-1zM634 611h1v3h-1zM124 279h1v2h-1zM235 376h1v2h-1zM154 388h1v1h-1zM273 488h1v1h-1zM155 389h1v2h-1zM158 394h1v1h-1zM219 373h1v1h-1zM666 684h1v1h-1zM528 570h1v1h-1zM184 388h1v1h-1zM45 229h1v2h-1zM102 210h1v2h-1zM340 527h1v1h-1zM147 361h1v4h-1zM265 474h1v3h-1zM279 494h1v1h-1zM280 495h1v2h-1zM651 667h1v2h-1zM303 478h1v1h-1zM532 566h1v1h-1zM685 665h1v1h-1zM445 539h1v3h-1zM874 536h1v1h-1zM769 636h1v2h-1zM629 597h1v3h-1zM119 265h1v4h-1zM430 509h1v1h-1zM108 228h1v5h-1zM459 571h1v2h-1zM633 608h1v3h-1zM793 596h1v3h-1zM780 627h1v1h-1zM404 492h1v2h-1zM160 396h1v1h-1zM801 578h1v1h-1zM388 524h1v2h-1zM400 499h1v2h-1zM557 567h1v1h-1zM561 573h1v2h-1zM294 493h1v2h-1zM646 652h1v4h-1zM264 471h1v3h-1zM85 212h1v1h-1zM324 493h1v2h-1zM290 501h1v1h-1zM717 654h1v1h-1zM469 588h1v1h-1zM639 627h1v2h-1zM800 579h1v2h-1zM246 407h1v4h-1zM197 371h1v1h-1zM451 553h1v3h-1zM628 594h1v3h-1zM380 528h1v2h-1zM458 568h1v3h-1zM475 594h1v1h-1zM190 380h1v2h-1zM476 595h1v1h-1zM185 387h1v1h-1zM560 571h1v2h-1zM787 612h1v2h-1zM319 480h1v2h-1zM863 562h1v1h-1zM245 404h1v3h-1zM336 522h1v2h-1zM770 635h1v1h-1zM678 673h1v2h-1zM41 237h1v2h-1zM569 586h1v1h-1zM766 641h1v2h-1zM761 648h1v1h-1zM478 597h1v1h-1zM115 256h1v2h-1zM727 641h1v2h-1zM317 477h1v1h-1zM13 251h1v1h-1zM318 478h1v2h-1zM677 675h1v2h-1zM764 644h1v1h-1zM452 556h1v2h-1zM672 682h1v1h-1zM237 380h1v2h-1zM805 573h1v1h-1zM335 520h1v2h-1zM104 215h1v3h-1zM797 586h1v2h-1zM396 507h1v3h-1zM293 495h1v2h-1zM12 252h1v2h-1zM89 207h1v1h-1zM195 374h1v1h-1zM267 479h1v3h-1zM289 502h1v1h-1zM253 436h1v3h-1zM748 644h1v1h-1zM282 499h1v2h-1zM437 522h1v2h-1zM46 228h1v1h-1zM444 537h1v2h-1zM11 254h1v2h-1zM304 477h1v1h-1zM429 507h1v2h-1zM533 565h1v1h-1zM461 575h1v2h-1zM472 591h1v1h-1zM189 382h1v1h-1zM301 480h1v1h-1zM860 564h1v1h-1zM872 538h1v1h-1zM563 577h1v2h-1zM652 669h1v1h-1zM44 231h1v2h-1zM871 539h1v2h-1zM728 640h1v1h-1zM765 643h1v1h-1zM86 211h1v1h-1zM460 573h1v2h-1zM412 497h1v1h-1zM474 593h1v1h-1zM551 561h1v1h-1zM722 649h1v1h-1zM480 599h1v1h-1zM345 531h1v1h-1zM16 248h1v1h-1zM194 375h1v1h-1zM414 500h1v1h-1zM159 395h1v1h-1zM392 516h1v2h-1zM440 528h1v2h-1zM771 634h1v1h-1zM341 528h1v1h-1zM182 391h1v1h-1zM300 481h1v1h-1zM752 647h1v1h-1zM682 667h1v1h-1zM859 565h1v1h-1zM709 662h1v1h-1zM806 572h1v1h-1zM592 584h1v1h-1zM747 643h1v1h-1zM716 655h1v1h-1zM90 206h1v1h-1zM470 589h1v1h-1zM531 567h1v1h-1zM749 645h1v1h-1z" fill="#A9DCE3"/>
<path d="M34 164h16v1h-16zM114 164h2v1h-2zM55 160h3v1h-3zM104 160h3v1h-3zM20 157h2v1h-2zM74 157h10v1h-10zM91 157h5v1h-5zM198 240h2v1h-2zM512 490h3v1h-3zM476 478h2v1h-2zM228 259h2v1h-2zM390 419h2v1h-2zM461 470h2v1h-2zM468 474h2v1h-2zM591 519h4v1h-4zM672 560h5v1h-5zM539 499h4v1h-4zM472 476h2v1h-2zM63 158h11v1h-11zM96 158h4v1h-4zM431 447h2v1h-2zM494 485h3v1h-3zM28 162h2v1h-2zM52 162h2v1h-2zM110 162h2v1h-2zM717 573h2v1h-2zM202 242h3v1h-3zM194 238h2v1h-2zM517 492h3v1h-3zM687 563h5v1h-5zM732 578h2v1h-2zM828 578h9v1h-9zM667 559h5v1h-5zM866 559h2v1h-2zM695 565h2v1h-2zM858 565h2v1h-2zM394 421h2v1h-2zM386 417h2v1h-2zM748 584h19v1h-19zM602 522h2v1h-2zM742 582h2v1h-2zM769 582h4v1h-4zM707 570h4v1h-4zM509 489h3v1h-3zM648 550h2v1h-2zM884 550h4v1h-4zM377 414h4v1h-4zM604 523h2v1h-2zM611 527h2v1h-2zM737 580h2v1h-2zM778 580h5v1h-5zM803 580h20v1h-20zM490 484h4v1h-4zM190 236h2v1h-2zM727 576h3v1h-3zM839 576h3v1h-3zM547 501h3v1h-3zM734 579h3v1h-3zM783 579h20v1h-20zM823 579h5v1h-5zM205 243h2v1h-2zM223 256h2v1h-2zM606 524h2v1h-2zM692 564h3v1h-3zM482 481h3v1h-3zM396 422h2v1h-2zM415 435h2v1h-2zM599 521h3v1h-3zM739 581h3v1h-3zM773 581h5v1h-5zM30 163h4v1h-4zM50 163h2v1h-2zM112 163h2v1h-2zM520 493h4v1h-4zM186 234h2v1h-2zM84 156h7v1h-7zM200 241h2v1h-2zM220 254h2v1h-2zM697 566h3v1h-3zM856 566h2v1h-2zM730 577h2v1h-2zM837 577h2v1h-2zM896 546h2v1h-2zM392 420h2v1h-2zM463 471h2v1h-2zM723 575h4v1h-4zM842 575h2v1h-2zM524 494h3v1h-3zM557 505h4v1h-4zM677 561h4v1h-4zM413 434h2v1h-2zM652 552h2v1h-2zM879 552h3v1h-3zM550 502h2v1h-2zM116 165h2v1h-2zM26 161h2v1h-2zM107 161h3v1h-3zM497 486h4v1h-4zM459 469h2v1h-2zM531 497h4v1h-4zM656 554h2v1h-2zM875 554h2v1h-2zM14 153h2v1h-2zM719 574h4v1h-4zM844 574h2v1h-2zM9 151h2v1h-2zM181 231h2v1h-2zM360 408h2v1h-2zM554 504h3v1h-3zM700 567h2v1h-2zM527 495h2v1h-2zM681 562h6v1h-6zM862 562h2v1h-2zM744 583h4v1h-4zM767 583h2v1h-2zM455 466h2v1h-2zM564 507h3v1h-3zM658 555h2v1h-2zM873 555h2v1h-2zM636 541h2v1h-2zM628 537h2v1h-2zM714 572h3v1h-3zM847 572h2v1h-2zM406 429h2v1h-2zM704 569h3v1h-3zM851 569h2v1h-2zM438 453h2v1h-2zM569 509h3v1h-3zM216 251h2v1h-2zM367 411h3v1h-3zM660 556h2v1h-2zM871 556h2v1h-2zM358 407h2v1h-2zM624 535h2v1h-2zM632 539h2v1h-2zM501 487h4v1h-4zM561 506h3v1h-3zM535 498h4v1h-4zM370 412h4v1h-4zM654 553h2v1h-2zM877 553h2v1h-2zM16 154h2v1h-2zM451 463h2v1h-2zM587 517h2v1h-2zM362 409h3v1h-3zM355 405h2v1h-2zM620 533h2v1h-2zM650 551h2v1h-2zM882 551h2v1h-2zM365 410h2v1h-2zM11 152h3v1h-3zM583 515h2v1h-2zM665 558h2v1h-2zM868 558h2v1h-2zM23 159h2v1h-2zM58 159h5v1h-5zM100 159h4v1h-4zM567 508h2v1h-2zM505 488h4v1h-4zM425 442h2v1h-2zM374 413h3v1h-3zM122 170h2v1h-2zM478 479h2v1h-2zM572 510h3v1h-3zM480 480h2v1h-2zM646 549h2v1h-2zM888 549h4v1h-4zM211 247h2v1h-2zM595 520h4v1h-4zM474 477h2v1h-2zM466 473h2v1h-2zM613 528h2v1h-2zM894 547h2v1h-2zM447 460h2v1h-2zM399 424h2v1h-2zM470 475h2v1h-2zM485 482h2v1h-2zM381 415h3v1h-3zM575 511h2v1h-2zM616 530h2v1h-2zM609 526h2v1h-2zM172 224h2v1h-2zM515 491h2v1h-2zM487 483h3v1h-3zM662 557h3v1h-3zM552 503h2v1h-2zM421 439h2v1h-2zM543 500h4v1h-4zM225 257h2v1h-2zM641 545h2v1h-2zM388 418h2v1h-2zM418 437h2v1h-2zM207 244h2v1h-2zM443 457h2v1h-2zM410 432h2v1h-2zM192 237h2v1h-2zM184 233h2v1h-2zM892 548h2v1h-2zM384 416h2v1h-2zM179 230h2v1h-2zM188 235h2v1h-2zM702 568h2v1h-2zM853 568h2v1h-2zM634 540h2v1h-2zM529 496h2v1h-2zM711 571h3v1h-3zM630 538h2v1h-2zM622 534h2v1h-2zM626 536h2v1h-2zM577 512h2v1h-2zM353 404h2v1h-2zM403 427h2v1h-2zM585 516h2v1h-2zM579 513h2v1h-2zM581 514h2v1h-2zM196 239h2v1h-2zM589 518h2v1h-2zM25 160h1v1h-1zM287 327h1v1h-1zM398 423h1v1h-1zM319 368h1v1h-1zM120 168h1v1h-1zM865 560h1v1h-1zM420 438h1v1h-1zM320 369h1v1h-1zM121 169h1v1h-1zM608 525h1v1h-1zM846 573h1v1h-1zM342 393h1v1h-1zM246 276h1v1h-1zM265 298h1v1h-1zM446 459h1v1h-1zM465 472h1v1h-1zM143 192h1v2h-1zM850 570h1v1h-1zM247 277h1v2h-1zM276 312h1v2h-1zM250 281h1v2h-1zM308 354h1v1h-1zM22 158h1v1h-1zM298 340h1v1h-1zM309 355h1v1h-1zM349 400h1v1h-1zM153 204h1v2h-1zM264 296h1v2h-1zM135 183h1v1h-1zM209 245h1v1h-1zM442 456h1v1h-1zM160 212h1v1h-1zM412 433h1v1h-1zM142 191h1v1h-1zM275 311h1v1h-1zM256 288h1v1h-1zM235 265h1v1h-1zM127 174h1v1h-1zM457 467h1v1h-1zM279 317h1v1h-1zM257 289h1v1h-1zM289 330h1v1h-1zM134 182h1v1h-1zM290 331h1v1h-1zM183 232h1v1h-1zM297 339h1v1h-1zM178 229h1v1h-1zM249 280h1v1h-1zM278 315h1v2h-1zM301 344h1v2h-1zM234 264h1v1h-1zM274 309h1v2h-1zM311 358h1v1h-1zM152 203h1v1h-1zM215 250h1v1h-1zM860 564h1v1h-1zM336 387h1v1h-1zM864 561h1v1h-1zM318 366h1v2h-1zM408 430h1v1h-1zM427 443h1v1h-1zM159 211h1v1h-1zM337 388h1v1h-1zM241 271h1v1h-1zM263 295h1v1h-1zM242 272h1v1h-1zM144 194h1v1h-1zM344 395h1v1h-1zM145 195h1v1h-1zM277 314h1v1h-1zM437 452h1v1h-1zM167 219h1v1h-1zM300 343h1v1h-1zM329 379h1v1h-1zM281 319h1v2h-1zM310 356h1v2h-1zM133 180h1v2h-1zM314 361h1v2h-1zM288 328h1v2h-1zM54 161h1v1h-1zM210 246h1v1h-1zM299 341h1v2h-1zM343 394h1v1h-1zM322 371h1v1h-1zM252 284h1v1h-1zM350 401h1v1h-1zM351 402h1v1h-1zM321 370h1v1h-1zM870 557h1v1h-1zM174 225h1v1h-1zM266 299h1v1h-1zM147 198h1v1h-1zM251 283h1v1h-1zM148 199h1v1h-1zM154 206h1v1h-1zM236 266h1v1h-1zM417 436h1v1h-1zM155 207h1v1h-1zM258 290h1v1h-1zM136 184h1v1h-1zM643 546h1v1h-1zM259 291h1v1h-1zM291 332h1v1h-1zM18 155h1v1h-1zM161 213h1v1h-1zM339 390h1v1h-1zM243 273h1v1h-1zM292 333h1v1h-1zM19 156h1v1h-1zM146 196h1v2h-1zM162 214h1v1h-1zM324 373h1v2h-1zM302 346h1v1h-1zM458 468h1v1h-1zM269 302h1v2h-1zM128 175h1v1h-1zM168 220h1v1h-1zM280 318h1v1h-1zM312 359h1v1h-1zM129 176h1v1h-1zM169 221h1v1h-1zM331 381h1v1h-1zM284 323h1v2h-1zM313 360h1v1h-1zM409 431h1v1h-1zM428 444h1v1h-1zM338 389h1v1h-1zM454 465h1v1h-1zM638 542h1v1h-1zM345 396h1v1h-1zM346 397h1v1h-1zM357 406h1v1h-1zM352 403h1v1h-1zM453 464h1v1h-1zM294 335h1v2h-1zM323 372h1v1h-1zM619 532h1v1h-1zM268 301h1v1h-1zM330 380h1v1h-1zM423 440h1v1h-1zM253 285h1v1h-1zM282 321h1v1h-1zM405 428h1v1h-1zM424 441h1v1h-1zM305 350h1v1h-1zM254 286h1v1h-1zM283 322h1v1h-1zM315 363h1v1h-1zM156 208h1v1h-1zM449 461h1v1h-1zM849 571h1v1h-1zM316 364h1v1h-1zM644 547h1v1h-1zM157 209h1v1h-1zM861 563h1v1h-1zM260 292h1v1h-1zM645 548h1v1h-1zM618 531h1v1h-1zM261 293h1v1h-1zM293 334h1v1h-1zM231 261h1v1h-1zM175 226h1v1h-1zM267 300h1v1h-1zM304 348h1v2h-1zM124 171h1v1h-1zM164 216h1v1h-1zM149 200h1v1h-1zM333 383h1v2h-1zM131 178h1v1h-1zM334 385h1v1h-1zM137 185h1v1h-1zM286 326h1v1h-1zM227 258h1v1h-1zM230 260h1v1h-1zM138 186h1v1h-1zM340 391h1v1h-1zM433 448h1v1h-1zM401 425h1v1h-1zM222 255h1v1h-1zM271 305h1v2h-1zM163 215h1v1h-1zM341 392h1v1h-1zM303 347h1v1h-1zM434 449h1v1h-1zM445 458h1v1h-1zM326 376h1v1h-1zM640 544h1v1h-1zM237 267h1v1h-1zM307 352h1v2h-1zM285 325h1v1h-1zM118 166h1v1h-1zM238 268h1v1h-1zM130 177h1v1h-1zM170 222h1v1h-1zM348 399h1v1h-1zM119 167h1v1h-1zM171 223h1v1h-1zM244 274h1v1h-1zM325 375h1v1h-1zM245 275h1v1h-1zM430 446h1v1h-1zM270 304h1v1h-1zM855 567h1v1h-1zM639 543h1v1h-1zM332 382h1v1h-1zM429 445h1v1h-1zM440 454h1v1h-1zM218 252h1v1h-1zM140 188h1v2h-1zM441 455h1v1h-1zM219 253h1v1h-1zM295 337h1v1h-1zM141 190h1v1h-1zM296 338h1v1h-1zM177 228h1v1h-1zM248 279h1v1h-1zM306 351h1v1h-1zM347 398h1v1h-1zM126 173h1v1h-1zM151 202h1v1h-1zM255 287h1v1h-1zM317 365h1v1h-1zM158 210h1v1h-1zM139 187h1v1h-1zM262 294h1v1h-1zM402 426h1v1h-1zM232 262h1v1h-1zM435 450h1v1h-1zM125 172h1v1h-1zM233 263h1v1h-1zM273 308h1v1h-1zM165 217h1v1h-1zM436 451h1v1h-1zM214 249h1v1h-1zM166 218h1v1h-1zM335 386h1v1h-1zM450 462h1v1h-1zM615 529h1v1h-1zM239 269h1v1h-1zM240 270h1v1h-1zM132 179h1v1h-1zM176 227h1v1h-1zM327 377h1v1h-1zM272 307h1v1h-1zM150 201h1v1h-1zM328 378h1v1h-1zM213 248h1v1h-1z" fill="#DA70D6"/>
<path d="M445 473h2v1h-2zM807 569h2v1h-2zM80 187h29v1h-29zM115 189h4v1h-4zM368 458h2v1h-2zM383 458h4v1h-4zM410 458h3v1h-3zM36 161h2v1h-2zM679 583h6v1h-6zM529 521h4v1h-4zM872 521h2v1h-2zM812 566h2v1h-2zM564 537h2v1h-2zM603 537h4v1h-4zM617 537h4v1h-4zM570 540h12v1h-12zM626 540h2v1h-2zM842 540h2v1h-2zM471 485h2v1h-2zM490 498h2v1h-2zM281 377h2v1h-2zM555 534h2v1h-2zM700 591h2v1h-2zM693 587h2v1h-2zM725 605h2v1h-2zM521 519h4v1h-4zM878 519h10v1h-10zM739 610h13v1h-13zM33 159h2v1h-2zM796 573h2v1h-2zM719 602h2v1h-2zM126 193h2v1h-2zM729 607h2v1h-2zM757 607h2v1h-2zM525 520h4v1h-4zM874 520h4v1h-4zM822 558h2v1h-2zM297 390h2v1h-2zM696 589h2v1h-2zM689 585h2v1h-2zM803 570h4v1h-4zM364 456h2v1h-2zM391 456h14v1h-14zM370 459h4v1h-4zM379 459h4v1h-4zM413 459h2v1h-2zM362 455h2v1h-2zM546 528h2v1h-2zM857 528h2v1h-2zM539 524h2v1h-2zM864 524h3v1h-3zM519 518h2v1h-2zM888 518h10v1h-10zM122 191h2v1h-2zM566 538h2v1h-2zM589 538h14v1h-14zM621 538h3v1h-3zM486 495h2v1h-2zM698 590h2v1h-2zM777 590h2v1h-2zM541 525h2v1h-2zM862 525h2v1h-2zM633 545h2v1h-2zM13 149h4v1h-4zM827 554h2v1h-2zM366 457h2v1h-2zM387 457h4v1h-4zM405 457h5v1h-5zM860 526h2v1h-2zM533 522h4v1h-4zM869 522h3v1h-3zM708 596h2v1h-2zM70 184h3v1h-3zM483 493h2v1h-2zM505 508h2v1h-2zM817 562h2v1h-2zM735 609h4v1h-4zM752 609h2v1h-2zM73 185h2v1h-2zM674 581h3v1h-3zM561 536h3v1h-3zM607 536h10v1h-10zM847 536h2v1h-2zM65 182h2v1h-2zM661 572h2v1h-2zM798 572h2v1h-2zM629 542h2v1h-2zM67 183h3v1h-3zM28 156h2v1h-2zM670 579h2v1h-2zM809 568h2v1h-2zM672 580h2v1h-2zM787 580h2v1h-2zM305 396h2v1h-2zM17 150h3v1h-3zM721 603h2v1h-2zM515 516h2v1h-2zM557 535h4v1h-4zM374 460h5v1h-5zM415 460h3v1h-3zM235 327h2v1h-2zM731 608h4v1h-4zM754 608h3v1h-3zM511 513h2v1h-2zM439 471h3v1h-3zM677 582h2v1h-2zM501 505h2v1h-2zM710 597h2v1h-2zM432 468h2v1h-2zM75 186h5v1h-5zM109 188h6v1h-6zM553 533h2v1h-2zM20 151h2v1h-2zM426 465h2v1h-2zM703 593h2v1h-2zM459 480h2v1h-2zM273 371h2v1h-2zM714 599h2v1h-2zM832 550h2v1h-2zM437 470h2v1h-2zM428 466h2v1h-2zM276 373h2v1h-2zM568 539h2v1h-2zM582 539h7v1h-7zM624 539h2v1h-2zM420 462h2v1h-2zM727 606h2v1h-2zM759 606h2v1h-2zM350 447h2v1h-2zM422 463h2v1h-2zM451 476h2v1h-2zM852 532h2v1h-2zM455 478h2v1h-2zM447 474h2v1h-2zM39 163h2v1h-2zM424 464h2v1h-2zM549 530h2v1h-2zM301 393h2v1h-2zM716 600h2v1h-2zM767 600h2v1h-2zM353 449h2v1h-2zM418 461h2v1h-2zM544 527h2v1h-2zM493 500h2v1h-2zM271 370h2v1h-2zM473 486h2v1h-2zM464 482h3v1h-3zM495 501h2v1h-2zM442 472h3v1h-3zM800 571h3v1h-3zM705 594h2v1h-2zM469 484h2v1h-2zM638 549h2v1h-2zM131 196h2v1h-2zM311 401h2v1h-2zM30 157h2v1h-2zM49 172h2v1h-2zM461 481h3v1h-3zM691 586h2v1h-2zM293 387h2v1h-2zM119 190h3v1h-3zM685 584h4v1h-4zM129 195h2v1h-2zM360 454h2v1h-2zM9 148h4v1h-4zM537 523h2v1h-2zM867 523h2v1h-2zM60 180h2v1h-2zM124 192h2v1h-2zM62 181h3v1h-3zM723 604h2v1h-2zM762 604h2v1h-2zM22 152h2v1h-2zM356 451h2v1h-2zM712 598h2v1h-2zM517 517h2v1h-2zM24 153h2v1h-2zM430 467h2v1h-2zM288 383h2v1h-2zM479 490h2v1h-2zM498 503h2v1h-2zM434 469h3v1h-3zM457 479h2v1h-2zM449 475h2v1h-2zM666 576h2v1h-2zM792 576h2v1h-2zM453 477h2v1h-2zM476 488h2v1h-2zM51 173h2v1h-2zM178 250h2v1h-2zM134 198h2v1h-2zM53 174h2v1h-2zM467 483h2v1h-2zM146 212h1v2h-1zM509 511h1v1h-1zM156 225h1v2h-1zM510 512h1v1h-1zM208 290h1v1h-1zM186 261h1v2h-1zM241 332h1v1h-1zM182 255h1v1h-1zM850 534h1v1h-1zM839 543h1v1h-1zM761 605h1v1h-1zM183 256h1v2h-1zM854 531h1v1h-1zM663 573h1v1h-1zM765 602h1v1h-1zM296 389h1v1h-1zM664 574h1v1h-1zM149 216h1v2h-1zM256 352h1v2h-1zM329 422h1v2h-1zM333 428h1v1h-1zM175 247h1v1h-1zM816 563h1v1h-1zM212 295h1v2h-1zM185 260h1v1h-1zM644 554h1v1h-1zM229 321h1v1h-1zM318 407h1v2h-1zM543 526h1v1h-1zM160 230h1v1h-1zM189 266h1v1h-1zM645 555h1v1h-1zM772 595h1v2h-1zM251 345h1v2h-1zM230 322h1v1h-1zM651 562h1v1h-1zM332 426h1v2h-1zM255 351h1v1h-1zM652 563h1v1h-1zM174 246h1v1h-1zM307 397h1v1h-1zM266 365h1v1h-1zM791 577h1v1h-1zM210 293h1v1h-1zM658 569h1v1h-1zM59 179h1v1h-1zM291 385h1v1h-1zM482 492h1v1h-1zM795 574h1v1h-1zM784 583h1v1h-1zM211 294h1v1h-1zM659 570h1v1h-1zM243 335h1v1h-1zM292 386h1v1h-1zM244 336h1v1h-1zM317 406h1v1h-1zM43 166h1v1h-1zM779 589h1v1h-1zM814 565h1v1h-1zM138 201h1v2h-1zM167 238h1v1h-1zM258 355h1v2h-1zM199 279h1v1h-1zM358 452h1v1h-1zM148 215h1v1h-1zM58 178h1v1h-1zM259 357h1v1h-1zM200 280h1v1h-1zM152 220h1v2h-1zM669 578h1v1h-1zM841 541h1v1h-1zM478 489h1v1h-1zM500 504h1v1h-1zM845 538h1v1h-1zM159 229h1v1h-1zM188 264h1v2h-1zM718 601h1v1h-1zM228 319h1v2h-1zM218 304h1v2h-1zM184 258h1v2h-1zM343 440h1v1h-1zM829 553h1v1h-1zM254 349h1v2h-1zM137 200h1v1h-1zM198 277h1v2h-1zM665 575h1v1h-1zM287 382h1v1h-1zM151 219h1v1h-1zM707 595h1v1h-1zM342 439h1v1h-1zM849 535h1v1h-1zM177 249h1v1h-1zM214 298h1v1h-1zM492 499h1v1h-1zM646 556h1v2h-1zM180 251h1v2h-1zM191 268h1v2h-1zM257 354h1v1h-1zM647 558h1v1h-1zM320 410h1v1h-1zM232 324h1v1h-1zM261 359h1v2h-1zM321 411h1v1h-1zM202 282h1v2h-1zM786 581h1v1h-1zM653 564h1v1h-1zM548 529h1v1h-1zM35 160h1v1h-1zM654 565h1v1h-1zM856 529h1v1h-1zM209 291h1v2h-1zM38 162h1v1h-1zM335 430h1v1h-1zM268 367h1v1h-1zM242 333h1v2h-1zM213 297h1v1h-1zM221 309h1v2h-1zM771 597h1v1h-1zM133 197h1v1h-1zM774 593h1v1h-1zM224 314h1v2h-1zM313 402h1v1h-1zM702 592h1v1h-1zM231 323h1v1h-1zM246 338h1v2h-1zM128 194h1v1h-1zM139 203h1v1h-1zM168 239h1v1h-1zM695 588h1v1h-1zM150 218h1v1h-1zM790 578h1v1h-1zM140 204h1v1h-1zM169 240h1v1h-1zM260 358h1v1h-1zM334 429h1v1h-1zM488 496h1v1h-1zM507 509h1v1h-1zM176 248h1v1h-1zM267 366h1v1h-1zM820 560h1v1h-1zM781 587h1v1h-1zM216 301h1v2h-1zM824 557h1v1h-1zM660 571h1v1h-1zM220 307h1v2h-1zM161 231h1v1h-1zM190 267h1v1h-1zM44 167h1v1h-1zM194 272h1v2h-1zM345 442h1v1h-1zM769 599h1v1h-1zM283 378h1v1h-1zM323 413h1v2h-1zM45 168h1v1h-1zM359 453h1v1h-1zM635 546h1v1h-1zM308 398h1v1h-1zM26 154h1v1h-1zM201 281h1v1h-1zM153 222h1v1h-1zM27 155h1v1h-1zM831 551h1v1h-1zM154 223h1v1h-1zM215 299h1v2h-1zM223 312h1v2h-1zM344 441h1v1h-1zM245 337h1v1h-1zM648 559h1v1h-1zM249 342h1v2h-1zM649 560h1v1h-1zM851 533h1v1h-1zM336 431h1v2h-1zM855 530h1v1h-1zM237 328h1v1h-1zM337 433h1v1h-1zM835 548h1v1h-1zM238 329h1v1h-1zM838 544h1v1h-1zM278 374h1v1h-1zM219 306h1v1h-1zM222 311h1v1h-1zM641 551h1v1h-1zM303 394h1v1h-1zM314 403h1v1h-1zM355 450h1v1h-1zM164 235h1v1h-1zM193 271h1v1h-1zM304 395h1v1h-1zM315 404h1v1h-1zM513 514h1v1h-1zM248 341h1v1h-1zM55 175h1v1h-1zM811 567h1v1h-1zM475 487h1v1h-1zM142 207h1v1h-1zM262 361h1v1h-1zM322 412h1v1h-1zM203 284h1v1h-1zM497 502h1v1h-1zM815 564h1v1h-1zM776 591h1v1h-1zM263 362h1v1h-1zM640 550h1v1h-1zM204 285h1v1h-1zM269 368h1v1h-1zM340 437h1v1h-1zM163 233h1v2h-1zM192 270h1v1h-1zM270 369h1v1h-1zM141 205h1v2h-1zM764 603h1v1h-1zM233 325h1v1h-1zM325 416h1v2h-1zM170 241h1v1h-1zM285 380h1v1h-1zM655 566h1v1h-1zM780 588h1v1h-1zM783 584h1v1h-1zM826 555h1v1h-1zM47 170h1v1h-1zM637 548h1v1h-1zM299 391h1v1h-1zM171 242h1v1h-1zM310 400h1v1h-1zM339 435h1v2h-1zM217 303h1v1h-1zM225 316h1v1h-1zM247 340h1v1h-1zM226 317h1v1h-1zM846 537h1v1h-1zM636 547h1v1h-1zM837 545h1v2h-1zM144 209h1v2h-1zM284 379h1v1h-1zM324 415h1v1h-1zM295 388h1v1h-1zM196 275h1v1h-1zM830 552h1v1h-1zM145 211h1v1h-1zM489 497h1v1h-1zM508 510h1v1h-1zM206 287h1v2h-1zM834 549h1v1h-1zM207 289h1v1h-1zM239 330h1v1h-1zM162 232h1v1h-1zM240 331h1v1h-1zM181 253h1v2h-1zM632 544h1v1h-1zM195 274h1v1h-1zM32 158h1v1h-1zM346 443h1v1h-1zM46 169h1v1h-1zM327 419h1v2h-1zM250 344h1v1h-1zM347 444h1v1h-1zM485 494h1v1h-1zM309 399h1v1h-1zM504 507h1v1h-1zM794 575h1v1h-1zM840 542h1v1h-1zM328 421h1v1h-1zM173 244h1v2h-1zM155 224h1v1h-1zM265 364h1v1h-1zM338 434h1v1h-1zM279 375h1v1h-1zM481 491h1v1h-1zM280 376h1v1h-1zM503 506h1v1h-1zM782 585h1v2h-1zM165 236h1v1h-1zM650 561h1v1h-1zM143 208h1v1h-1zM775 592h1v1h-1zM821 559h1v1h-1zM166 237h1v1h-1zM844 539h1v1h-1zM56 176h1v1h-1zM766 601h1v1h-1zM264 363h1v1h-1zM147 214h1v1h-1zM859 527h1v1h-1zM57 177h1v1h-1zM770 598h1v1h-1zM172 243h1v1h-1zM657 568h1v1h-1zM352 448h1v1h-1zM205 286h1v1h-1zM331 425h1v1h-1zM290 384h1v1h-1zM628 541h1v1h-1zM631 543h1v1h-1zM642 552h1v1h-1zM158 228h1v1h-1zM643 553h1v1h-1zM227 318h1v1h-1zM316 405h1v1h-1zM552 532h1v1h-1zM514 515h1v1h-1zM836 547h1v1h-1zM825 556h1v1h-1zM42 165h1v1h-1zM234 326h1v1h-1zM253 348h1v1h-1zM326 418h1v1h-1zM275 372h1v1h-1zM286 381h1v1h-1zM656 567h1v1h-1zM157 227h1v1h-1zM300 392h1v1h-1zM668 577h1v1h-1zM341 438h1v1h-1zM785 582h1v1h-1zM41 164h1v1h-1zM252 347h1v1h-1zM551 531h1v1h-1zM789 579h1v1h-1zM187 263h1v1h-1zM136 199h1v1h-1zM197 276h1v1h-1zM319 409h1v1h-1zM348 445h1v1h-1zM48 171h1v1h-1zM330 424h1v1h-1zM773 594h1v1h-1zM819 561h1v1h-1zM349 446h1v1h-1z" fill="#9932CC"/>
<line x1="453" y1="483" x2="978" y2="483" stroke="#FF4500" stroke-width="2.2"/>
<line x1="729" y1="618" x2="979" y2="480" stroke="#FF4500" stroke-width="2.2" shape-rendering="geometricPrecision"/>
</g>
<rect x="979" y="127" width="2" height="1" fill="#000"/>
<text class="s" x="985" y="130" font-size="10" textLength="26.5" lengthAdjust="spacingAndGlyphs">1.7260</text>
<rect x="979" y="159" width="2" height="1" fill="#000"/>
<text class="s" x="985" y="162" font-size="10" textLength="26.5" lengthAdjust="spacingAndGlyphs">1.6910</text>
<rect x="979" y="191" width="2" height="1" fill="#000"/>
<text class="s" x="985" y="194" font-size="10" textLength="26.5" lengthAdjust="spacingAndGlyphs">1.6550</text>
<rect x="979" y="223" width="2" height="1" fill="#000"/>
<text class="s" x="985" y="226" font-size="10" textLength="26.5" lengthAdjust="spacingAndGlyphs">1.6190</text>
<rect x="979" y="255" width="2" height="1" fill="#000"/>
<text class="s" x="985" y="258" font-size="10" textLength="26.5" lengthAdjust="spacingAndGlyphs">1.5830</text>
<rect x="979" y="287" width="2" height="1" fill="#000"/>
<text class="s" x="985" y="290" font-size="10" textLength="26.5" lengthAdjust="spacingAndGlyphs">1.5470</text>
<rect x="979" y="319" width="2" height="1" fill="#000"/>
<text class="s" x="985" y="322" font-size="10" textLength="26.5" lengthAdjust="spacingAndGlyphs">1.5110</text>
<rect x="979" y="351" width="2" height="1" fill="#000"/>
<text class="s" x="985" y="354" font-size="10" textLength="26.5" lengthAdjust="spacingAndGlyphs">1.4750</text>
<rect x="979" y="383" width="2" height="1" fill="#000"/>
<text class="s" x="985" y="386" font-size="10" textLength="26.5" lengthAdjust="spacingAndGlyphs">1.4390</text>
<rect x="979" y="415" width="2" height="1" fill="#000"/>
<text class="s" x="985" y="418" font-size="10" textLength="26.5" lengthAdjust="spacingAndGlyphs">1.4030</text>
<rect x="979" y="447" width="2" height="1" fill="#000"/>
<text class="s" x="985" y="450" font-size="10" textLength="26.5" lengthAdjust="spacingAndGlyphs">1.3670</text>
<rect x="979" y="479" width="2" height="1" fill="#000"/>
<text class="s" x="985" y="482" font-size="10" textLength="26.5" lengthAdjust="spacingAndGlyphs">1.3310</text>
<rect x="979" y="511" width="2" height="1" fill="#000"/>
<text class="s" x="985" y="514" font-size="10" textLength="26.5" lengthAdjust="spacingAndGlyphs">1.2950</text>
<rect x="979" y="543" width="2" height="1" fill="#000"/>
<text class="s" x="985" y="546" font-size="10" textLength="26.5" lengthAdjust="spacingAndGlyphs">1.2590</text>
<rect x="979" y="575" width="2" height="1" fill="#000"/>
<text class="s" x="985" y="578" font-size="10" textLength="26.5" lengthAdjust="spacingAndGlyphs">1.2240</text>
<rect x="979" y="607" width="2" height="1" fill="#000"/>
<text class="s" x="985" y="610" font-size="10" textLength="26.5" lengthAdjust="spacingAndGlyphs">1.1880</text>
<rect x="979" y="639" width="2" height="1" fill="#000"/>
<text class="s" x="985" y="642" font-size="10" textLength="26.5" lengthAdjust="spacingAndGlyphs">1.1520</text>
<rect x="979" y="671" width="2" height="1" fill="#000"/>
<text class="s" x="985" y="674" font-size="10" textLength="26.5" lengthAdjust="spacingAndGlyphs">1.1160</text>
<rect x="981" y="494" width="34" height="11" fill="#000"/>
<text class="s" x="985" y="503" font-size="10" fill="#fff" textLength="26.5" lengthAdjust="spacingAndGlyphs">1.3069</text>
<rect x="9" y="674" width="1" height="3" fill="#000"/>
<text class="s" x="8" y="686" font-size="10" textLength="48.5" lengthAdjust="spacingAndGlyphs">4 Nov 2001</text>
<rect x="73" y="674" width="1" height="3" fill="#000"/>
<text class="s" x="72" y="686" font-size="10" textLength="52" lengthAdjust="spacingAndGlyphs">24 Feb 2002</text>
<rect x="137" y="674" width="1" height="3" fill="#000"/>
<text class="s" x="136" y="686" font-size="10" textLength="50" lengthAdjust="spacingAndGlyphs">16 Jun 2002</text>
<rect x="201" y="674" width="1" height="3" fill="#000"/>
<text class="s" x="200" y="686" font-size="10" textLength="46" lengthAdjust="spacingAndGlyphs">6 Oct 2002</text>
<rect x="265" y="674" width="1" height="3" fill="#000"/>
<text class="s" x="264" y="686" font-size="10" textLength="50" lengthAdjust="spacingAndGlyphs">26 Jan 2003</text>
<rect x="329" y="674" width="1" height="3" fill="#000"/>
<text class="s" x="328" y="686" font-size="10" textLength="54" lengthAdjust="spacingAndGlyphs">18 May 2003</text>
<rect x="393" y="674" width="1" height="3" fill="#000"/>
<text class="s" x="392" y="686" font-size="10" textLength="47" lengthAdjust="spacingAndGlyphs">7 Sep 2003</text>
<rect x="457" y="674" width="1" height="3" fill="#000"/>
<text class="s" x="456" y="686" font-size="10" textLength="52" lengthAdjust="spacingAndGlyphs">28 Dec 2003</text>
<rect x="521" y="674" width="1" height="3" fill="#000"/>
<text class="s" x="520" y="686" font-size="10" textLength="51" lengthAdjust="spacingAndGlyphs">18 Apr 2004</text>
<rect x="585" y="674" width="1" height="3" fill="#000"/>
<text class="s" x="584" y="686" font-size="10" textLength="48" lengthAdjust="spacingAndGlyphs">8 Aug 2004</text>
<rect x="649" y="674" width="1" height="3" fill="#000"/>
<text class="s" x="648" y="686" font-size="10" textLength="53" lengthAdjust="spacingAndGlyphs">28 Nov 2004</text>
<rect x="713" y="674" width="1" height="3" fill="#000"/>
<text class="s" x="712" y="686" font-size="10" textLength="52" lengthAdjust="spacingAndGlyphs">20 Mar 2005</text>
<rect x="777" y="674" width="1" height="3" fill="#000"/>
<text class="s" x="776" y="686" font-size="10" textLength="46" lengthAdjust="spacingAndGlyphs">10 Jul 2005</text>
<rect x="841" y="674" width="1" height="3" fill="#000"/>
<text class="s" x="840" y="686" font-size="10" textLength="50" lengthAdjust="spacingAndGlyphs">30 Oct 2005</text>
<text class="s" x="13" y="112" font-size="10" textLength="72.5" lengthAdjust="spacingAndGlyphs">USDCHF,Weekly</text>
<text class="s" x="93.5" y="112" font-size="10" textLength="119.5" lengthAdjust="spacingAndGlyphs">1.2935 1.3083 1.2913 1.3069</text>
<rect x="4" y="693" width="1016" height="1" fill="#000"/>
<rect x="4" y="694" width="1016" height="19" fill="#D0D0C8"/>
<rect x="4" y="694" width="1" height="19" fill="#808080"/>
<rect x="5" y="694" width="1" height="19" fill="#404040"/>
<rect x="85" y="693" width="99" height="19" fill="#FFFFFF"/>
<rect x="84" y="694" width="1" height="18" fill="#000"/>
<rect x="184" y="693" width="1" height="19" fill="#000"/>
<rect x="85" y="711" width="100" height="1" fill="#000"/>
<text class="s" x="18.0" y="706" font-size="11" fill="#444" textLength="54" lengthAdjust="spacingAndGlyphs">USDJPY,H4</text>
<text class="s" x="195.0" y="706" font-size="11" fill="#444" textLength="56" lengthAdjust="spacingAndGlyphs">GBPUSD,H4</text>
<text class="s" x="273.5" y="706" font-size="11" fill="#444" textLength="43" lengthAdjust="spacingAndGlyphs">USDX,H4</text>
<text class="s" x="338.5" y="706" font-size="11" fill="#444" textLength="57" lengthAdjust="spacingAndGlyphs">USDCAD,H1</text>
<text class="s" x="417.5" y="706" font-size="11" fill="#444" textLength="67" lengthAdjust="spacingAndGlyphs">EURUSD,Daily</text>
<text class="s" x="506.5" y="706" font-size="11" fill="#444" textLength="57" lengthAdjust="spacingAndGlyphs">EURCAD,H1</text>
<text class="s" x="94" y="706" font-size="11" textLength="78" lengthAdjust="spacingAndGlyphs">USDCHF,Weekly</text>
<rect x="263" y="697" width="1" height="12" fill="#555"/>
<rect x="328" y="697" width="1" height="12" fill="#555"/>
<rect x="407" y="697" width="1" height="12" fill="#555"/>
<rect x="496" y="697" width="1" height="12" fill="#555"/>
<rect x="576" y="697" width="1" height="12" fill="#555"/>
<path d="M992 703.5 l3.500 -3.500 v7 z M1012 703.5 l-3.500 -3.500 v7 z" fill="#8a8a8a" shape-rendering="geometricPrecision"/>
<rect x="1019" y="694" width="1" height="20" fill="#FFFFFF"/>
<rect x="4" y="713" width="1016" height="1" fill="#FFFFFF"/>
<text class="c" x="7" y="728" font-size="11" font-weight="bold" textLength="94" lengthAdjust="spacingAndGlyphs">寻求帮助, 请按F1键</text>
<text class="m" x="154" y="728" font-size="10" font-weight="bold" textLength="41" lengthAdjust="spacingAndGlyphs">Default</text>
<rect x="148" y="716" width="1" height="18" fill="#808080"/>
<rect x="149" y="716" width="1" height="18" fill="#FFFFFF"/>
<rect x="312" y="716" width="1" height="18" fill="#808080"/>
<rect x="313" y="716" width="1" height="18" fill="#FFFFFF"/>
<rect x="427" y="716" width="1" height="18" fill="#808080"/>
<rect x="428" y="716" width="1" height="18" fill="#FFFFFF"/>
<rect x="516" y="716" width="1" height="18" fill="#808080"/>
<rect x="517" y="716" width="1" height="18" fill="#FFFFFF"/>
<rect x="601" y="716" width="1" height="18" fill="#808080"/>
<rect x="602" y="716" width="1" height="18" fill="#FFFFFF"/>
<rect x="687" y="716" width="1" height="18" fill="#808080"/>
<rect x="688" y="716" width="1" height="18" fill="#FFFFFF"/>
<rect x="772" y="716" width="1" height="18" fill="#808080"/>
<rect x="773" y="716" width="1" height="18" fill="#FFFFFF"/>
<rect x="858" y="716" width="1" height="18" fill="#808080"/>
<rect x="859" y="716" width="1" height="18" fill="#FFFFFF"/>
<rect x="864" y="719" width="2" height="10" fill="#6B8E23"/>
<rect x="864" y="729" width="2" height="2" fill="#1C3C6C"/>
<rect x="867" y="719" width="2" height="9" fill="#6B8E23"/>
<rect x="867" y="728" width="2" height="3" fill="#1C3C6C"/>
<rect x="870" y="719" width="2" height="8" fill="#6B8E23"/>
<rect x="870" y="727" width="2" height="4" fill="#1C3C6C"/>
<rect x="873" y="719" width="2" height="7" fill="#6B8E23"/>
<rect x="873" y="726" width="2" height="5" fill="#1C3C6C"/>
<rect x="876" y="719" width="2" height="6" fill="#6B8E23"/>
<rect x="876" y="725" width="2" height="6" fill="#1C3C6C"/>
<rect x="879" y="719" width="2" height="5" fill="#6B8E23"/>
<rect x="879" y="724" width="2" height="7" fill="#1C3C6C"/>
<rect x="882" y="719" width="2" height="4" fill="#6B8E23"/>
<rect x="882" y="723" width="2" height="8" fill="#1C3C6C"/>
<rect x="885" y="719" width="2" height="3" fill="#6B8E23"/>
<rect x="885" y="722" width="2" height="9" fill="#1C3C6C"/>
<text class="m" x="916" y="728" font-size="10" font-weight="bold" textLength="42" lengthAdjust="spacingAndGlyphs">81/1 kb</text>
<path d="M1018 719 L1003 734" stroke="#fff" stroke-width="1.2" shape-rendering="geometricPrecision"/>
<path d="M1019 720.5 L1004.5 735" stroke="#808080" stroke-width="2" shape-rendering="geometricPrecision"/>
<path d="M1018 723 L1007 734" stroke="#fff" stroke-width="1.2" shape-rendering="geometricPrecision"/>
<path d="M1019 724.5 L1008.5 735" stroke="#808080" stroke-width="2" shape-rendering="geometricPrecision"/>
<path d="M1018 727 L1011 734" stroke="#fff" stroke-width="1.2" shape-rendering="geometricPrecision"/>
<path d="M1019 728.5 L1012.5 735" stroke="#808080" stroke-width="2" shape-rendering="geometricPrecision"/>
</svg>
</body></html>
